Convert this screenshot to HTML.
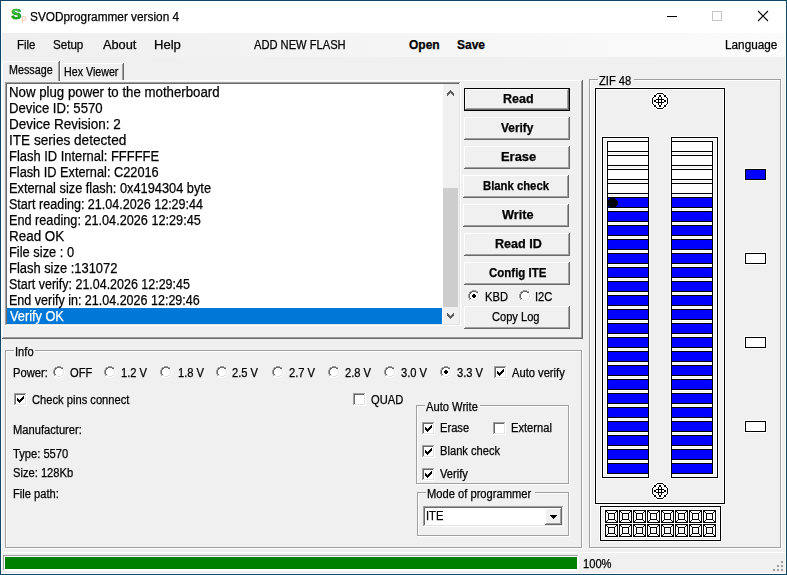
<!DOCTYPE html><html><head><meta charset="utf-8"><style>
html,body{margin:0;padding:0;width:787px;height:575px;overflow:hidden;background:#f0f0f0}
.t{position:absolute;white-space:pre;-webkit-text-stroke:0.25px currentColor}
</style></head><body>
<div style="position:absolute;left:0px;top:0px;width:787px;height:575px;background:#0f4866"></div>
<div style="position:absolute;left:1px;top:1px;width:785px;height:573px;background:#fff"></div>
<div style="position:absolute;left:2px;top:33px;width:783px;height:540px;background:#f0f0f0"></div>
<div style="position:absolute;left:2px;top:33px;width:783px;height:24px;background:linear-gradient(to right,#efefef,#fbfbfb)"></div>
<div class="t" style="left:11.3px;top:6.2px;font:bold 15px/15px 'Liberation Sans', sans-serif;color:#2fb52f;-webkit-text-stroke:0.7px #1a9c1a;background:linear-gradient(#7ee07e 0%,#3cc03c 45%,#0a960a 100%);-webkit-background-clip:text;-webkit-text-fill-color:transparent">S</div>
<div class="t" style="left:21.5px;top:14px;font:9px/9px 'Liberation Sans', sans-serif;color:#f9c49a;-webkit-text-stroke:0">p</div>
<div class="t" style="left:30.02px;top:11px;font:12px/12px 'Liberation Sans', sans-serif;color:#000;transform:scaleX(0.9847);transform-origin:0 0">SVODprogrammer version 4</div>
<div style="position:absolute;left:667px;top:16px;width:10px;height:1px;background:#000"></div>
<div style="position:absolute;left:712px;top:11px;width:10px;height:10px;border:1px solid #c6c6c6;box-sizing:border-box"></div>
<svg style="position:absolute;left:757px;top:10px" width="12" height="12" viewBox="0 0 12 12"><path d="M1 1 L11 11 M11 1 L1 11" stroke="#000" stroke-width="1.1"/></svg>
<div class="t" style="left:16.84px;top:39px;font:12px/12px 'Liberation Sans', sans-serif;color:#000;transform:scaleX(0.9556);transform-origin:0 0">File</div>
<div class="t" style="left:53.03px;top:39px;font:12px/12px 'Liberation Sans', sans-serif;color:#000;transform:scaleX(0.9667);transform-origin:0 0">Setup</div>
<div class="t" style="left:103.00px;top:39px;font:12px/12px 'Liberation Sans', sans-serif;color:#000;transform:scaleX(1.0645);transform-origin:0 0">About</div>
<div class="t" style="left:153.91px;top:39px;font:12px/12px 'Liberation Sans', sans-serif;color:#000;transform:scaleX(1.0870);transform-origin:0 0">Help</div>
<div class="t" style="left:254.00px;top:39px;font:12px/12px 'Liberation Sans', sans-serif;color:#000;transform:scaleX(0.9286);transform-origin:0 0">ADD NEW FLASH</div>
<div class="t" style="left:725.02px;top:39px;font:12px/12px 'Liberation Sans', sans-serif;color:#000;transform:scaleX(0.9808);transform-origin:0 0">Language</div>
<div class="t" style="left:409.00px;top:39px;font:bold 12px/12px 'Liberation Sans', sans-serif;color:#000;transform:scaleX(1.0000);transform-origin:0 0">Open</div>
<div class="t" style="left:457.00px;top:39px;font:bold 12px/12px 'Liberation Sans', sans-serif;color:#000;transform:scaleX(1.0000);transform-origin:0 0">Save</div>
<div style="position:absolute;left:2px;top:80px;width:581px;height:259px;background:#696969"></div>
<div style="position:absolute;left:2px;top:80px;width:580px;height:258px;background:#fff"></div>
<div style="position:absolute;left:3px;top:81px;width:579px;height:257px;background:#a0a0a0"></div>
<div style="position:absolute;left:3px;top:81px;width:578px;height:256px;background:#f0f0f0"></div>
<div style="position:absolute;left:60px;top:63px;width:64px;height:17px;background:#696969"></div>
<div style="position:absolute;left:60px;top:63px;width:63px;height:17px;background:#fff"></div>
<div style="position:absolute;left:61px;top:64px;width:62px;height:16px;background:#a0a0a0"></div>
<div style="position:absolute;left:61px;top:64px;width:61px;height:16px;background:#f0f0f0"></div>
<div class="t" style="left:63.51px;top:66px;font:12px/12px 'Liberation Sans', sans-serif;color:#000;transform:scaleX(0.8900);transform-origin:0 0">Hex Viewer</div>
<div style="position:absolute;left:2px;top:61px;width:58px;height:20px;background:#696969"></div>
<div style="position:absolute;left:2px;top:61px;width:57px;height:20px;background:#fff"></div>
<div style="position:absolute;left:3px;top:62px;width:56px;height:19px;background:#a0a0a0"></div>
<div style="position:absolute;left:3px;top:62px;width:55px;height:19px;background:#f0f0f0"></div>
<div class="t" style="left:8.60px;top:64px;font:12px/12px 'Liberation Sans', sans-serif;color:#000;transform:scaleX(0.8957);transform-origin:0 0">Message</div>
<div style="position:absolute;left:5px;top:82px;width:456px;height:244px;background:#fff"></div>
<div style="position:absolute;left:5px;top:82px;width:455px;height:243px;background:#a0a0a0"></div>
<div style="position:absolute;left:6px;top:83px;width:454px;height:242px;background:#e3e3e3"></div>
<div style="position:absolute;left:6px;top:83px;width:453px;height:241px;background:#696969"></div>
<div style="position:absolute;left:7px;top:84px;width:452px;height:240px;background:#fff"></div>
<div style="position:absolute;left:7px;top:308px;width:435px;height:16px;background:#0078d7"></div>
<div class="t" style="left:9.05px;top:85px;font:14px/14px 'Liberation Sans', sans-serif;color:#000;transform:scaleX(0.9462);transform-origin:0 0">Now plug power to the motherboard</div>
<div class="t" style="left:9.06px;top:101px;font:14px/14px 'Liberation Sans', sans-serif;color:#000;transform:scaleX(0.9398);transform-origin:0 0">Device ID: 5570</div>
<div class="t" style="left:9.04px;top:117px;font:14px/14px 'Liberation Sans', sans-serif;color:#000;transform:scaleX(0.9635);transform-origin:0 0">Device Revision: 2</div>
<div class="t" style="left:9.03px;top:133px;font:14px/14px 'Liberation Sans', sans-serif;color:#000;transform:scaleX(0.9723);transform-origin:0 0">ITE series detected</div>
<div class="t" style="left:9.08px;top:149px;font:14px/14px 'Liberation Sans', sans-serif;color:#000;transform:scaleX(0.9230);transform-origin:0 0">Flash ID Internal: FFFFFE</div>
<div class="t" style="left:9.09px;top:165px;font:14px/14px 'Liberation Sans', sans-serif;color:#000;transform:scaleX(0.9117);transform-origin:0 0">Flash ID External: C22016</div>
<div class="t" style="left:9.09px;top:181px;font:14px/14px 'Liberation Sans', sans-serif;color:#000;transform:scaleX(0.9141);transform-origin:0 0">External size flash: 0x4194304 byte</div>
<div class="t" style="left:9.10px;top:197px;font:14px/14px 'Liberation Sans', sans-serif;color:#000;transform:scaleX(0.8967);transform-origin:0 0">Start reading: 21.04.2026 12:29:44</div>
<div class="t" style="left:9.09px;top:213px;font:14px/14px 'Liberation Sans', sans-serif;color:#000;transform:scaleX(0.9057);transform-origin:0 0">End reading: 21.04.2026 12:29:45</div>
<div class="t" style="left:9.04px;top:229px;font:14px/14px 'Liberation Sans', sans-serif;color:#000;transform:scaleX(0.9589);transform-origin:0 0">Read OK</div>
<div class="t" style="left:9.08px;top:245px;font:14px/14px 'Liberation Sans', sans-serif;color:#000;transform:scaleX(0.9203);transform-origin:0 0">File size : 0</div>
<div class="t" style="left:9.08px;top:261px;font:14px/14px 'Liberation Sans', sans-serif;color:#000;transform:scaleX(0.9224);transform-origin:0 0">Flash size :131072</div>
<div class="t" style="left:9.11px;top:277px;font:14px/14px 'Liberation Sans', sans-serif;color:#000;transform:scaleX(0.8901);transform-origin:0 0">Start verify: 21.04.2026 12:29:45</div>
<div class="t" style="left:9.11px;top:293px;font:14px/14px 'Liberation Sans', sans-serif;color:#000;transform:scaleX(0.8943);transform-origin:0 0">End verify in: 21.04.2026 12:29:46</div>
<div class="t" style="left:10.00px;top:309px;font:14px/14px 'Liberation Sans', sans-serif;color:#fff;transform:scaleX(0.9102);transform-origin:0 0">Verify OK</div>
<div style="position:absolute;left:443px;top:84px;width:16px;height:240px;background:#f0f0f0"></div>
<div style="position:absolute;left:443px;top:188px;width:15px;height:119px;background:#cdcdcd"></div>
<svg style="position:absolute;left:447px;top:90px" width="7" height="6" shape-rendering="crispEdges"><rect x="3" y="0" width="1" height="1" fill="#606060"/><rect x="2" y="1" width="3" height="1" fill="#606060"/><rect x="1" y="2" width="5" height="1" fill="#606060"/><rect x="0" y="3" width="3" height="1" fill="#606060"/><rect x="4" y="3" width="3" height="1" fill="#606060"/><rect x="0" y="4" width="2" height="1" fill="#606060"/><rect x="5" y="4" width="2" height="1" fill="#606060"/><rect x="0" y="5" width="1" height="1" fill="#606060"/><rect x="6" y="5" width="1" height="1" fill="#606060"/></svg>
<svg style="position:absolute;left:447px;top:313px" width="7" height="6" shape-rendering="crispEdges"><rect x="0" y="0" width="1" height="1" fill="#606060"/><rect x="6" y="0" width="1" height="1" fill="#606060"/><rect x="0" y="1" width="2" height="1" fill="#606060"/><rect x="5" y="1" width="2" height="1" fill="#606060"/><rect x="0" y="2" width="3" height="1" fill="#606060"/><rect x="4" y="2" width="3" height="1" fill="#606060"/><rect x="1" y="3" width="5" height="1" fill="#606060"/><rect x="2" y="4" width="3" height="1" fill="#606060"/><rect x="3" y="5" width="1" height="1" fill="#606060"/></svg>
<div style="position:absolute;left:464px;top:88px;width:106px;height:23px;background:#000"></div>
<div style="position:absolute;left:465px;top:89px;width:104px;height:21px;background:#696969"></div>
<div style="position:absolute;left:465px;top:89px;width:103px;height:20px;background:#fff"></div>
<div style="position:absolute;left:466px;top:90px;width:102px;height:19px;background:#a0a0a0"></div>
<div style="position:absolute;left:466px;top:90px;width:101px;height:18px;background:#f0f0f0"></div>
<div class="t" style="left:502.66px;top:93px;font:bold 12px/12px 'Liberation Sans', sans-serif;color:#000;transform:scaleX(1.0429);transform-origin:0 0">Read</div>
<div style="position:absolute;left:464px;top:117px;width:106px;height:23px;background:#696969"></div>
<div style="position:absolute;left:464px;top:117px;width:105px;height:22px;background:#fff"></div>
<div style="position:absolute;left:465px;top:118px;width:104px;height:21px;background:#a0a0a0"></div>
<div style="position:absolute;left:465px;top:118px;width:103px;height:20px;background:#f0f0f0"></div>
<div class="t" style="left:500.90px;top:122px;font:bold 12px/12px 'Liberation Sans', sans-serif;color:#000;transform:scaleX(0.9909);transform-origin:0 0">Verify</div>
<div style="position:absolute;left:464px;top:146px;width:106px;height:23px;background:#696969"></div>
<div style="position:absolute;left:464px;top:146px;width:105px;height:22px;background:#fff"></div>
<div style="position:absolute;left:465px;top:147px;width:104px;height:21px;background:#a0a0a0"></div>
<div style="position:absolute;left:465px;top:147px;width:103px;height:20px;background:#f0f0f0"></div>
<div class="t" style="left:500.52px;top:151px;font:bold 12px/12px 'Liberation Sans', sans-serif;color:#000;transform:scaleX(1.0774);transform-origin:0 0">Erase</div>
<div style="position:absolute;left:463px;top:175px;width:106px;height:23px;background:#696969"></div>
<div style="position:absolute;left:463px;top:175px;width:105px;height:22px;background:#fff"></div>
<div style="position:absolute;left:464px;top:176px;width:104px;height:21px;background:#a0a0a0"></div>
<div style="position:absolute;left:464px;top:176px;width:103px;height:20px;background:#f0f0f0"></div>
<div class="t" style="left:482.56px;top:180px;font:bold 12px/12px 'Liberation Sans', sans-serif;color:#000;transform:scaleX(0.9420);transform-origin:0 0">Blank check</div>
<div style="position:absolute;left:463px;top:204px;width:106px;height:23px;background:#696969"></div>
<div style="position:absolute;left:463px;top:204px;width:105px;height:22px;background:#fff"></div>
<div style="position:absolute;left:464px;top:205px;width:104px;height:21px;background:#a0a0a0"></div>
<div style="position:absolute;left:464px;top:205px;width:103px;height:20px;background:#f0f0f0"></div>
<div class="t" style="left:502.20px;top:209px;font:bold 12px/12px 'Liberation Sans', sans-serif;color:#000;transform:scaleX(1.0586);transform-origin:0 0">Write</div>
<div style="position:absolute;left:464px;top:233px;width:106px;height:23px;background:#696969"></div>
<div style="position:absolute;left:464px;top:233px;width:105px;height:22px;background:#fff"></div>
<div style="position:absolute;left:465px;top:234px;width:104px;height:21px;background:#a0a0a0"></div>
<div style="position:absolute;left:465px;top:234px;width:103px;height:20px;background:#f0f0f0"></div>
<div class="t" style="left:494.55px;top:238px;font:bold 12px/12px 'Liberation Sans', sans-serif;color:#000;transform:scaleX(1.0488);transform-origin:0 0">Read ID</div>
<div style="position:absolute;left:464px;top:262px;width:106px;height:23px;background:#696969"></div>
<div style="position:absolute;left:464px;top:262px;width:105px;height:22px;background:#fff"></div>
<div style="position:absolute;left:465px;top:263px;width:104px;height:21px;background:#a0a0a0"></div>
<div style="position:absolute;left:465px;top:263px;width:103px;height:20px;background:#f0f0f0"></div>
<div class="t" style="left:489.40px;top:267px;font:bold 12px/12px 'Liberation Sans', sans-serif;color:#000;transform:scaleX(0.9567);transform-origin:0 0">Config ITE</div>
<svg style="position:absolute;left:468px;top:290px" width="12" height="12" shape-rendering="crispEdges"><rect x="4" y="0" width="4" height="1" fill="#a0a0a0"/><rect x="2" y="1" width="2" height="1" fill="#a0a0a0"/><rect x="4" y="1" width="4" height="1" fill="#696969"/><rect x="8" y="1" width="2" height="1" fill="#a0a0a0"/><rect x="1" y="2" width="1" height="1" fill="#a0a0a0"/><rect x="2" y="2" width="2" height="1" fill="#696969"/><rect x="4" y="2" width="4" height="1" fill="#fff"/><rect x="8" y="2" width="2" height="1" fill="#696969"/><rect x="10" y="2" width="1" height="1" fill="#fff"/><rect x="1" y="3" width="1" height="1" fill="#a0a0a0"/><rect x="2" y="3" width="1" height="1" fill="#696969"/><rect x="3" y="3" width="6" height="1" fill="#fff"/><rect x="9" y="3" width="1" height="1" fill="#e3e3e3"/><rect x="10" y="3" width="1" height="1" fill="#fff"/><rect x="0" y="4" width="1" height="1" fill="#a0a0a0"/><rect x="1" y="4" width="1" height="1" fill="#696969"/><rect x="2" y="4" width="3" height="1" fill="#fff"/><rect x="5" y="4" width="2" height="1" fill="#000"/><rect x="7" y="4" width="3" height="1" fill="#fff"/><rect x="10" y="4" width="1" height="1" fill="#e3e3e3"/><rect x="11" y="4" width="1" height="1" fill="#fff"/><rect x="0" y="5" width="1" height="1" fill="#a0a0a0"/><rect x="1" y="5" width="1" height="1" fill="#696969"/><rect x="2" y="5" width="2" height="1" fill="#fff"/><rect x="4" y="5" width="4" height="1" fill="#000"/><rect x="8" y="5" width="2" height="1" fill="#fff"/><rect x="10" y="5" width="1" height="1" fill="#e3e3e3"/><rect x="11" y="5" width="1" height="1" fill="#fff"/><rect x="0" y="6" width="1" height="1" fill="#a0a0a0"/><rect x="1" y="6" width="1" height="1" fill="#696969"/><rect x="2" y="6" width="2" height="1" fill="#fff"/><rect x="4" y="6" width="4" height="1" fill="#000"/><rect x="8" y="6" width="2" height="1" fill="#fff"/><rect x="10" y="6" width="1" height="1" fill="#e3e3e3"/><rect x="11" y="6" width="1" height="1" fill="#fff"/><rect x="0" y="7" width="1" height="1" fill="#a0a0a0"/><rect x="1" y="7" width="1" height="1" fill="#696969"/><rect x="2" y="7" width="3" height="1" fill="#fff"/><rect x="5" y="7" width="2" height="1" fill="#000"/><rect x="7" y="7" width="3" height="1" fill="#fff"/><rect x="10" y="7" width="1" height="1" fill="#e3e3e3"/><rect x="11" y="7" width="1" height="1" fill="#fff"/><rect x="1" y="8" width="1" height="1" fill="#a0a0a0"/><rect x="2" y="8" width="1" height="1" fill="#696969"/><rect x="3" y="8" width="6" height="1" fill="#fff"/><rect x="9" y="8" width="1" height="1" fill="#e3e3e3"/><rect x="10" y="8" width="1" height="1" fill="#fff"/><rect x="1" y="9" width="1" height="1" fill="#a0a0a0"/><rect x="2" y="9" width="2" height="1" fill="#e3e3e3"/><rect x="4" y="9" width="4" height="1" fill="#fff"/><rect x="8" y="9" width="2" height="1" fill="#e3e3e3"/><rect x="10" y="9" width="1" height="1" fill="#fff"/><rect x="2" y="10" width="2" height="1" fill="#fff"/><rect x="4" y="10" width="4" height="1" fill="#e3e3e3"/><rect x="8" y="10" width="2" height="1" fill="#fff"/><rect x="4" y="11" width="4" height="1" fill="#fff"/></svg>
<div class="t" style="left:484.5px;top:291px;font:12px/12px 'Liberation Sans', sans-serif;color:#000;transform:scaleX(0.93);transform-origin:0 0">KBD</div>
<svg style="position:absolute;left:519px;top:290px" width="12" height="12" shape-rendering="crispEdges"><rect x="4" y="0" width="4" height="1" fill="#a0a0a0"/><rect x="2" y="1" width="2" height="1" fill="#a0a0a0"/><rect x="4" y="1" width="4" height="1" fill="#696969"/><rect x="8" y="1" width="2" height="1" fill="#a0a0a0"/><rect x="1" y="2" width="1" height="1" fill="#a0a0a0"/><rect x="2" y="2" width="2" height="1" fill="#696969"/><rect x="4" y="2" width="4" height="1" fill="#fff"/><rect x="8" y="2" width="2" height="1" fill="#696969"/><rect x="10" y="2" width="1" height="1" fill="#fff"/><rect x="1" y="3" width="1" height="1" fill="#a0a0a0"/><rect x="2" y="3" width="1" height="1" fill="#696969"/><rect x="3" y="3" width="6" height="1" fill="#fff"/><rect x="9" y="3" width="1" height="1" fill="#e3e3e3"/><rect x="10" y="3" width="1" height="1" fill="#fff"/><rect x="0" y="4" width="1" height="1" fill="#a0a0a0"/><rect x="1" y="4" width="1" height="1" fill="#696969"/><rect x="2" y="4" width="8" height="1" fill="#fff"/><rect x="10" y="4" width="1" height="1" fill="#e3e3e3"/><rect x="11" y="4" width="1" height="1" fill="#fff"/><rect x="0" y="5" width="1" height="1" fill="#a0a0a0"/><rect x="1" y="5" width="1" height="1" fill="#696969"/><rect x="2" y="5" width="8" height="1" fill="#fff"/><rect x="10" y="5" width="1" height="1" fill="#e3e3e3"/><rect x="11" y="5" width="1" height="1" fill="#fff"/><rect x="0" y="6" width="1" height="1" fill="#a0a0a0"/><rect x="1" y="6" width="1" height="1" fill="#696969"/><rect x="2" y="6" width="8" height="1" fill="#fff"/><rect x="10" y="6" width="1" height="1" fill="#e3e3e3"/><rect x="11" y="6" width="1" height="1" fill="#fff"/><rect x="0" y="7" width="1" height="1" fill="#a0a0a0"/><rect x="1" y="7" width="1" height="1" fill="#696969"/><rect x="2" y="7" width="8" height="1" fill="#fff"/><rect x="10" y="7" width="1" height="1" fill="#e3e3e3"/><rect x="11" y="7" width="1" height="1" fill="#fff"/><rect x="1" y="8" width="1" height="1" fill="#a0a0a0"/><rect x="2" y="8" width="1" height="1" fill="#696969"/><rect x="3" y="8" width="6" height="1" fill="#fff"/><rect x="9" y="8" width="1" height="1" fill="#e3e3e3"/><rect x="10" y="8" width="1" height="1" fill="#fff"/><rect x="1" y="9" width="1" height="1" fill="#a0a0a0"/><rect x="2" y="9" width="2" height="1" fill="#e3e3e3"/><rect x="4" y="9" width="4" height="1" fill="#fff"/><rect x="8" y="9" width="2" height="1" fill="#e3e3e3"/><rect x="10" y="9" width="1" height="1" fill="#fff"/><rect x="2" y="10" width="2" height="1" fill="#fff"/><rect x="4" y="10" width="4" height="1" fill="#e3e3e3"/><rect x="8" y="10" width="2" height="1" fill="#fff"/><rect x="4" y="11" width="4" height="1" fill="#fff"/></svg>
<div class="t" style="left:535px;top:291px;font:12px/12px 'Liberation Sans', sans-serif;color:#000;transform:scaleX(0.93);transform-origin:0 0">I2C</div>
<div style="position:absolute;left:464px;top:306px;width:106px;height:23px;background:#696969"></div>
<div style="position:absolute;left:464px;top:306px;width:105px;height:22px;background:#fff"></div>
<div style="position:absolute;left:465px;top:307px;width:104px;height:21px;background:#a0a0a0"></div>
<div style="position:absolute;left:465px;top:307px;width:103px;height:20px;background:#f0f0f0"></div>
<div class="t" style="left:492.38px;top:311px;font:12px/12px 'Liberation Sans', sans-serif;color:#000;transform:scaleX(0.9240);transform-origin:0 0">Copy Log</div>
<div style="position:absolute;left:5px;top:350px;width:577px;height:198px;border:1px solid #a0a0a0;box-sizing:border-box"></div>
<div style="position:absolute;left:6px;top:351px;width:575px;height:1px;background:#fff"></div>
<div style="position:absolute;left:6px;top:351px;width:1px;height:196px;background:#fff"></div>
<div style="position:absolute;left:5px;top:548px;width:578px;height:1px;background:#fff"></div>
<div style="position:absolute;left:582px;top:350px;width:1px;height:199px;background:#fff"></div>
<div style="position:absolute;left:14px;top:349px;width:21px;height:3px;background:#f0f0f0"></div>
<div class="t" style="left:15px;top:346px;font:12px/12px 'Liberation Sans', sans-serif;color:#000;transform:scaleX(0.93);transform-origin:0 0">Info</div>
<div class="t" style="left:13px;top:367px;font:12px/12px 'Liberation Sans', sans-serif;color:#000;transform:scaleX(0.93);transform-origin:0 0">Power:</div>
<svg style="position:absolute;left:53px;top:366px" width="12" height="12" shape-rendering="crispEdges"><rect x="4" y="0" width="4" height="1" fill="#a0a0a0"/><rect x="2" y="1" width="2" height="1" fill="#a0a0a0"/><rect x="4" y="1" width="4" height="1" fill="#696969"/><rect x="8" y="1" width="2" height="1" fill="#a0a0a0"/><rect x="1" y="2" width="1" height="1" fill="#a0a0a0"/><rect x="2" y="2" width="2" height="1" fill="#696969"/><rect x="4" y="2" width="4" height="1" fill="#fff"/><rect x="8" y="2" width="2" height="1" fill="#696969"/><rect x="10" y="2" width="1" height="1" fill="#fff"/><rect x="1" y="3" width="1" height="1" fill="#a0a0a0"/><rect x="2" y="3" width="1" height="1" fill="#696969"/><rect x="3" y="3" width="6" height="1" fill="#fff"/><rect x="9" y="3" width="1" height="1" fill="#e3e3e3"/><rect x="10" y="3" width="1" height="1" fill="#fff"/><rect x="0" y="4" width="1" height="1" fill="#a0a0a0"/><rect x="1" y="4" width="1" height="1" fill="#696969"/><rect x="2" y="4" width="8" height="1" fill="#fff"/><rect x="10" y="4" width="1" height="1" fill="#e3e3e3"/><rect x="11" y="4" width="1" height="1" fill="#fff"/><rect x="0" y="5" width="1" height="1" fill="#a0a0a0"/><rect x="1" y="5" width="1" height="1" fill="#696969"/><rect x="2" y="5" width="8" height="1" fill="#fff"/><rect x="10" y="5" width="1" height="1" fill="#e3e3e3"/><rect x="11" y="5" width="1" height="1" fill="#fff"/><rect x="0" y="6" width="1" height="1" fill="#a0a0a0"/><rect x="1" y="6" width="1" height="1" fill="#696969"/><rect x="2" y="6" width="8" height="1" fill="#fff"/><rect x="10" y="6" width="1" height="1" fill="#e3e3e3"/><rect x="11" y="6" width="1" height="1" fill="#fff"/><rect x="0" y="7" width="1" height="1" fill="#a0a0a0"/><rect x="1" y="7" width="1" height="1" fill="#696969"/><rect x="2" y="7" width="8" height="1" fill="#fff"/><rect x="10" y="7" width="1" height="1" fill="#e3e3e3"/><rect x="11" y="7" width="1" height="1" fill="#fff"/><rect x="1" y="8" width="1" height="1" fill="#a0a0a0"/><rect x="2" y="8" width="1" height="1" fill="#696969"/><rect x="3" y="8" width="6" height="1" fill="#fff"/><rect x="9" y="8" width="1" height="1" fill="#e3e3e3"/><rect x="10" y="8" width="1" height="1" fill="#fff"/><rect x="1" y="9" width="1" height="1" fill="#a0a0a0"/><rect x="2" y="9" width="2" height="1" fill="#e3e3e3"/><rect x="4" y="9" width="4" height="1" fill="#fff"/><rect x="8" y="9" width="2" height="1" fill="#e3e3e3"/><rect x="10" y="9" width="1" height="1" fill="#fff"/><rect x="2" y="10" width="2" height="1" fill="#fff"/><rect x="4" y="10" width="4" height="1" fill="#e3e3e3"/><rect x="8" y="10" width="2" height="1" fill="#fff"/><rect x="4" y="11" width="4" height="1" fill="#fff"/></svg>
<div class="t" style="left:70px;top:367px;font:12px/12px 'Liberation Sans', sans-serif;color:#000;transform:scaleX(0.93);transform-origin:0 0">OFF</div>
<svg style="position:absolute;left:104px;top:366px" width="12" height="12" shape-rendering="crispEdges"><rect x="4" y="0" width="4" height="1" fill="#a0a0a0"/><rect x="2" y="1" width="2" height="1" fill="#a0a0a0"/><rect x="4" y="1" width="4" height="1" fill="#696969"/><rect x="8" y="1" width="2" height="1" fill="#a0a0a0"/><rect x="1" y="2" width="1" height="1" fill="#a0a0a0"/><rect x="2" y="2" width="2" height="1" fill="#696969"/><rect x="4" y="2" width="4" height="1" fill="#fff"/><rect x="8" y="2" width="2" height="1" fill="#696969"/><rect x="10" y="2" width="1" height="1" fill="#fff"/><rect x="1" y="3" width="1" height="1" fill="#a0a0a0"/><rect x="2" y="3" width="1" height="1" fill="#696969"/><rect x="3" y="3" width="6" height="1" fill="#fff"/><rect x="9" y="3" width="1" height="1" fill="#e3e3e3"/><rect x="10" y="3" width="1" height="1" fill="#fff"/><rect x="0" y="4" width="1" height="1" fill="#a0a0a0"/><rect x="1" y="4" width="1" height="1" fill="#696969"/><rect x="2" y="4" width="8" height="1" fill="#fff"/><rect x="10" y="4" width="1" height="1" fill="#e3e3e3"/><rect x="11" y="4" width="1" height="1" fill="#fff"/><rect x="0" y="5" width="1" height="1" fill="#a0a0a0"/><rect x="1" y="5" width="1" height="1" fill="#696969"/><rect x="2" y="5" width="8" height="1" fill="#fff"/><rect x="10" y="5" width="1" height="1" fill="#e3e3e3"/><rect x="11" y="5" width="1" height="1" fill="#fff"/><rect x="0" y="6" width="1" height="1" fill="#a0a0a0"/><rect x="1" y="6" width="1" height="1" fill="#696969"/><rect x="2" y="6" width="8" height="1" fill="#fff"/><rect x="10" y="6" width="1" height="1" fill="#e3e3e3"/><rect x="11" y="6" width="1" height="1" fill="#fff"/><rect x="0" y="7" width="1" height="1" fill="#a0a0a0"/><rect x="1" y="7" width="1" height="1" fill="#696969"/><rect x="2" y="7" width="8" height="1" fill="#fff"/><rect x="10" y="7" width="1" height="1" fill="#e3e3e3"/><rect x="11" y="7" width="1" height="1" fill="#fff"/><rect x="1" y="8" width="1" height="1" fill="#a0a0a0"/><rect x="2" y="8" width="1" height="1" fill="#696969"/><rect x="3" y="8" width="6" height="1" fill="#fff"/><rect x="9" y="8" width="1" height="1" fill="#e3e3e3"/><rect x="10" y="8" width="1" height="1" fill="#fff"/><rect x="1" y="9" width="1" height="1" fill="#a0a0a0"/><rect x="2" y="9" width="2" height="1" fill="#e3e3e3"/><rect x="4" y="9" width="4" height="1" fill="#fff"/><rect x="8" y="9" width="2" height="1" fill="#e3e3e3"/><rect x="10" y="9" width="1" height="1" fill="#fff"/><rect x="2" y="10" width="2" height="1" fill="#fff"/><rect x="4" y="10" width="4" height="1" fill="#e3e3e3"/><rect x="8" y="10" width="2" height="1" fill="#fff"/><rect x="4" y="11" width="4" height="1" fill="#fff"/></svg>
<div class="t" style="left:121px;top:367px;font:12px/12px 'Liberation Sans', sans-serif;color:#000;transform:scaleX(0.93);transform-origin:0 0">1.2 V</div>
<svg style="position:absolute;left:160px;top:366px" width="12" height="12" shape-rendering="crispEdges"><rect x="4" y="0" width="4" height="1" fill="#a0a0a0"/><rect x="2" y="1" width="2" height="1" fill="#a0a0a0"/><rect x="4" y="1" width="4" height="1" fill="#696969"/><rect x="8" y="1" width="2" height="1" fill="#a0a0a0"/><rect x="1" y="2" width="1" height="1" fill="#a0a0a0"/><rect x="2" y="2" width="2" height="1" fill="#696969"/><rect x="4" y="2" width="4" height="1" fill="#fff"/><rect x="8" y="2" width="2" height="1" fill="#696969"/><rect x="10" y="2" width="1" height="1" fill="#fff"/><rect x="1" y="3" width="1" height="1" fill="#a0a0a0"/><rect x="2" y="3" width="1" height="1" fill="#696969"/><rect x="3" y="3" width="6" height="1" fill="#fff"/><rect x="9" y="3" width="1" height="1" fill="#e3e3e3"/><rect x="10" y="3" width="1" height="1" fill="#fff"/><rect x="0" y="4" width="1" height="1" fill="#a0a0a0"/><rect x="1" y="4" width="1" height="1" fill="#696969"/><rect x="2" y="4" width="8" height="1" fill="#fff"/><rect x="10" y="4" width="1" height="1" fill="#e3e3e3"/><rect x="11" y="4" width="1" height="1" fill="#fff"/><rect x="0" y="5" width="1" height="1" fill="#a0a0a0"/><rect x="1" y="5" width="1" height="1" fill="#696969"/><rect x="2" y="5" width="8" height="1" fill="#fff"/><rect x="10" y="5" width="1" height="1" fill="#e3e3e3"/><rect x="11" y="5" width="1" height="1" fill="#fff"/><rect x="0" y="6" width="1" height="1" fill="#a0a0a0"/><rect x="1" y="6" width="1" height="1" fill="#696969"/><rect x="2" y="6" width="8" height="1" fill="#fff"/><rect x="10" y="6" width="1" height="1" fill="#e3e3e3"/><rect x="11" y="6" width="1" height="1" fill="#fff"/><rect x="0" y="7" width="1" height="1" fill="#a0a0a0"/><rect x="1" y="7" width="1" height="1" fill="#696969"/><rect x="2" y="7" width="8" height="1" fill="#fff"/><rect x="10" y="7" width="1" height="1" fill="#e3e3e3"/><rect x="11" y="7" width="1" height="1" fill="#fff"/><rect x="1" y="8" width="1" height="1" fill="#a0a0a0"/><rect x="2" y="8" width="1" height="1" fill="#696969"/><rect x="3" y="8" width="6" height="1" fill="#fff"/><rect x="9" y="8" width="1" height="1" fill="#e3e3e3"/><rect x="10" y="8" width="1" height="1" fill="#fff"/><rect x="1" y="9" width="1" height="1" fill="#a0a0a0"/><rect x="2" y="9" width="2" height="1" fill="#e3e3e3"/><rect x="4" y="9" width="4" height="1" fill="#fff"/><rect x="8" y="9" width="2" height="1" fill="#e3e3e3"/><rect x="10" y="9" width="1" height="1" fill="#fff"/><rect x="2" y="10" width="2" height="1" fill="#fff"/><rect x="4" y="10" width="4" height="1" fill="#e3e3e3"/><rect x="8" y="10" width="2" height="1" fill="#fff"/><rect x="4" y="11" width="4" height="1" fill="#fff"/></svg>
<div class="t" style="left:178px;top:367px;font:12px/12px 'Liberation Sans', sans-serif;color:#000;transform:scaleX(0.93);transform-origin:0 0">1.8 V</div>
<svg style="position:absolute;left:216px;top:366px" width="12" height="12" shape-rendering="crispEdges"><rect x="4" y="0" width="4" height="1" fill="#a0a0a0"/><rect x="2" y="1" width="2" height="1" fill="#a0a0a0"/><rect x="4" y="1" width="4" height="1" fill="#696969"/><rect x="8" y="1" width="2" height="1" fill="#a0a0a0"/><rect x="1" y="2" width="1" height="1" fill="#a0a0a0"/><rect x="2" y="2" width="2" height="1" fill="#696969"/><rect x="4" y="2" width="4" height="1" fill="#fff"/><rect x="8" y="2" width="2" height="1" fill="#696969"/><rect x="10" y="2" width="1" height="1" fill="#fff"/><rect x="1" y="3" width="1" height="1" fill="#a0a0a0"/><rect x="2" y="3" width="1" height="1" fill="#696969"/><rect x="3" y="3" width="6" height="1" fill="#fff"/><rect x="9" y="3" width="1" height="1" fill="#e3e3e3"/><rect x="10" y="3" width="1" height="1" fill="#fff"/><rect x="0" y="4" width="1" height="1" fill="#a0a0a0"/><rect x="1" y="4" width="1" height="1" fill="#696969"/><rect x="2" y="4" width="8" height="1" fill="#fff"/><rect x="10" y="4" width="1" height="1" fill="#e3e3e3"/><rect x="11" y="4" width="1" height="1" fill="#fff"/><rect x="0" y="5" width="1" height="1" fill="#a0a0a0"/><rect x="1" y="5" width="1" height="1" fill="#696969"/><rect x="2" y="5" width="8" height="1" fill="#fff"/><rect x="10" y="5" width="1" height="1" fill="#e3e3e3"/><rect x="11" y="5" width="1" height="1" fill="#fff"/><rect x="0" y="6" width="1" height="1" fill="#a0a0a0"/><rect x="1" y="6" width="1" height="1" fill="#696969"/><rect x="2" y="6" width="8" height="1" fill="#fff"/><rect x="10" y="6" width="1" height="1" fill="#e3e3e3"/><rect x="11" y="6" width="1" height="1" fill="#fff"/><rect x="0" y="7" width="1" height="1" fill="#a0a0a0"/><rect x="1" y="7" width="1" height="1" fill="#696969"/><rect x="2" y="7" width="8" height="1" fill="#fff"/><rect x="10" y="7" width="1" height="1" fill="#e3e3e3"/><rect x="11" y="7" width="1" height="1" fill="#fff"/><rect x="1" y="8" width="1" height="1" fill="#a0a0a0"/><rect x="2" y="8" width="1" height="1" fill="#696969"/><rect x="3" y="8" width="6" height="1" fill="#fff"/><rect x="9" y="8" width="1" height="1" fill="#e3e3e3"/><rect x="10" y="8" width="1" height="1" fill="#fff"/><rect x="1" y="9" width="1" height="1" fill="#a0a0a0"/><rect x="2" y="9" width="2" height="1" fill="#e3e3e3"/><rect x="4" y="9" width="4" height="1" fill="#fff"/><rect x="8" y="9" width="2" height="1" fill="#e3e3e3"/><rect x="10" y="9" width="1" height="1" fill="#fff"/><rect x="2" y="10" width="2" height="1" fill="#fff"/><rect x="4" y="10" width="4" height="1" fill="#e3e3e3"/><rect x="8" y="10" width="2" height="1" fill="#fff"/><rect x="4" y="11" width="4" height="1" fill="#fff"/></svg>
<div class="t" style="left:232px;top:367px;font:12px/12px 'Liberation Sans', sans-serif;color:#000;transform:scaleX(0.93);transform-origin:0 0">2.5 V</div>
<svg style="position:absolute;left:272px;top:366px" width="12" height="12" shape-rendering="crispEdges"><rect x="4" y="0" width="4" height="1" fill="#a0a0a0"/><rect x="2" y="1" width="2" height="1" fill="#a0a0a0"/><rect x="4" y="1" width="4" height="1" fill="#696969"/><rect x="8" y="1" width="2" height="1" fill="#a0a0a0"/><rect x="1" y="2" width="1" height="1" fill="#a0a0a0"/><rect x="2" y="2" width="2" height="1" fill="#696969"/><rect x="4" y="2" width="4" height="1" fill="#fff"/><rect x="8" y="2" width="2" height="1" fill="#696969"/><rect x="10" y="2" width="1" height="1" fill="#fff"/><rect x="1" y="3" width="1" height="1" fill="#a0a0a0"/><rect x="2" y="3" width="1" height="1" fill="#696969"/><rect x="3" y="3" width="6" height="1" fill="#fff"/><rect x="9" y="3" width="1" height="1" fill="#e3e3e3"/><rect x="10" y="3" width="1" height="1" fill="#fff"/><rect x="0" y="4" width="1" height="1" fill="#a0a0a0"/><rect x="1" y="4" width="1" height="1" fill="#696969"/><rect x="2" y="4" width="8" height="1" fill="#fff"/><rect x="10" y="4" width="1" height="1" fill="#e3e3e3"/><rect x="11" y="4" width="1" height="1" fill="#fff"/><rect x="0" y="5" width="1" height="1" fill="#a0a0a0"/><rect x="1" y="5" width="1" height="1" fill="#696969"/><rect x="2" y="5" width="8" height="1" fill="#fff"/><rect x="10" y="5" width="1" height="1" fill="#e3e3e3"/><rect x="11" y="5" width="1" height="1" fill="#fff"/><rect x="0" y="6" width="1" height="1" fill="#a0a0a0"/><rect x="1" y="6" width="1" height="1" fill="#696969"/><rect x="2" y="6" width="8" height="1" fill="#fff"/><rect x="10" y="6" width="1" height="1" fill="#e3e3e3"/><rect x="11" y="6" width="1" height="1" fill="#fff"/><rect x="0" y="7" width="1" height="1" fill="#a0a0a0"/><rect x="1" y="7" width="1" height="1" fill="#696969"/><rect x="2" y="7" width="8" height="1" fill="#fff"/><rect x="10" y="7" width="1" height="1" fill="#e3e3e3"/><rect x="11" y="7" width="1" height="1" fill="#fff"/><rect x="1" y="8" width="1" height="1" fill="#a0a0a0"/><rect x="2" y="8" width="1" height="1" fill="#696969"/><rect x="3" y="8" width="6" height="1" fill="#fff"/><rect x="9" y="8" width="1" height="1" fill="#e3e3e3"/><rect x="10" y="8" width="1" height="1" fill="#fff"/><rect x="1" y="9" width="1" height="1" fill="#a0a0a0"/><rect x="2" y="9" width="2" height="1" fill="#e3e3e3"/><rect x="4" y="9" width="4" height="1" fill="#fff"/><rect x="8" y="9" width="2" height="1" fill="#e3e3e3"/><rect x="10" y="9" width="1" height="1" fill="#fff"/><rect x="2" y="10" width="2" height="1" fill="#fff"/><rect x="4" y="10" width="4" height="1" fill="#e3e3e3"/><rect x="8" y="10" width="2" height="1" fill="#fff"/><rect x="4" y="11" width="4" height="1" fill="#fff"/></svg>
<div class="t" style="left:289px;top:367px;font:12px/12px 'Liberation Sans', sans-serif;color:#000;transform:scaleX(0.93);transform-origin:0 0">2.7 V</div>
<svg style="position:absolute;left:328px;top:366px" width="12" height="12" shape-rendering="crispEdges"><rect x="4" y="0" width="4" height="1" fill="#a0a0a0"/><rect x="2" y="1" width="2" height="1" fill="#a0a0a0"/><rect x="4" y="1" width="4" height="1" fill="#696969"/><rect x="8" y="1" width="2" height="1" fill="#a0a0a0"/><rect x="1" y="2" width="1" height="1" fill="#a0a0a0"/><rect x="2" y="2" width="2" height="1" fill="#696969"/><rect x="4" y="2" width="4" height="1" fill="#fff"/><rect x="8" y="2" width="2" height="1" fill="#696969"/><rect x="10" y="2" width="1" height="1" fill="#fff"/><rect x="1" y="3" width="1" height="1" fill="#a0a0a0"/><rect x="2" y="3" width="1" height="1" fill="#696969"/><rect x="3" y="3" width="6" height="1" fill="#fff"/><rect x="9" y="3" width="1" height="1" fill="#e3e3e3"/><rect x="10" y="3" width="1" height="1" fill="#fff"/><rect x="0" y="4" width="1" height="1" fill="#a0a0a0"/><rect x="1" y="4" width="1" height="1" fill="#696969"/><rect x="2" y="4" width="8" height="1" fill="#fff"/><rect x="10" y="4" width="1" height="1" fill="#e3e3e3"/><rect x="11" y="4" width="1" height="1" fill="#fff"/><rect x="0" y="5" width="1" height="1" fill="#a0a0a0"/><rect x="1" y="5" width="1" height="1" fill="#696969"/><rect x="2" y="5" width="8" height="1" fill="#fff"/><rect x="10" y="5" width="1" height="1" fill="#e3e3e3"/><rect x="11" y="5" width="1" height="1" fill="#fff"/><rect x="0" y="6" width="1" height="1" fill="#a0a0a0"/><rect x="1" y="6" width="1" height="1" fill="#696969"/><rect x="2" y="6" width="8" height="1" fill="#fff"/><rect x="10" y="6" width="1" height="1" fill="#e3e3e3"/><rect x="11" y="6" width="1" height="1" fill="#fff"/><rect x="0" y="7" width="1" height="1" fill="#a0a0a0"/><rect x="1" y="7" width="1" height="1" fill="#696969"/><rect x="2" y="7" width="8" height="1" fill="#fff"/><rect x="10" y="7" width="1" height="1" fill="#e3e3e3"/><rect x="11" y="7" width="1" height="1" fill="#fff"/><rect x="1" y="8" width="1" height="1" fill="#a0a0a0"/><rect x="2" y="8" width="1" height="1" fill="#696969"/><rect x="3" y="8" width="6" height="1" fill="#fff"/><rect x="9" y="8" width="1" height="1" fill="#e3e3e3"/><rect x="10" y="8" width="1" height="1" fill="#fff"/><rect x="1" y="9" width="1" height="1" fill="#a0a0a0"/><rect x="2" y="9" width="2" height="1" fill="#e3e3e3"/><rect x="4" y="9" width="4" height="1" fill="#fff"/><rect x="8" y="9" width="2" height="1" fill="#e3e3e3"/><rect x="10" y="9" width="1" height="1" fill="#fff"/><rect x="2" y="10" width="2" height="1" fill="#fff"/><rect x="4" y="10" width="4" height="1" fill="#e3e3e3"/><rect x="8" y="10" width="2" height="1" fill="#fff"/><rect x="4" y="11" width="4" height="1" fill="#fff"/></svg>
<div class="t" style="left:345px;top:367px;font:12px/12px 'Liberation Sans', sans-serif;color:#000;transform:scaleX(0.93);transform-origin:0 0">2.8 V</div>
<svg style="position:absolute;left:384px;top:366px" width="12" height="12" shape-rendering="crispEdges"><rect x="4" y="0" width="4" height="1" fill="#a0a0a0"/><rect x="2" y="1" width="2" height="1" fill="#a0a0a0"/><rect x="4" y="1" width="4" height="1" fill="#696969"/><rect x="8" y="1" width="2" height="1" fill="#a0a0a0"/><rect x="1" y="2" width="1" height="1" fill="#a0a0a0"/><rect x="2" y="2" width="2" height="1" fill="#696969"/><rect x="4" y="2" width="4" height="1" fill="#fff"/><rect x="8" y="2" width="2" height="1" fill="#696969"/><rect x="10" y="2" width="1" height="1" fill="#fff"/><rect x="1" y="3" width="1" height="1" fill="#a0a0a0"/><rect x="2" y="3" width="1" height="1" fill="#696969"/><rect x="3" y="3" width="6" height="1" fill="#fff"/><rect x="9" y="3" width="1" height="1" fill="#e3e3e3"/><rect x="10" y="3" width="1" height="1" fill="#fff"/><rect x="0" y="4" width="1" height="1" fill="#a0a0a0"/><rect x="1" y="4" width="1" height="1" fill="#696969"/><rect x="2" y="4" width="8" height="1" fill="#fff"/><rect x="10" y="4" width="1" height="1" fill="#e3e3e3"/><rect x="11" y="4" width="1" height="1" fill="#fff"/><rect x="0" y="5" width="1" height="1" fill="#a0a0a0"/><rect x="1" y="5" width="1" height="1" fill="#696969"/><rect x="2" y="5" width="8" height="1" fill="#fff"/><rect x="10" y="5" width="1" height="1" fill="#e3e3e3"/><rect x="11" y="5" width="1" height="1" fill="#fff"/><rect x="0" y="6" width="1" height="1" fill="#a0a0a0"/><rect x="1" y="6" width="1" height="1" fill="#696969"/><rect x="2" y="6" width="8" height="1" fill="#fff"/><rect x="10" y="6" width="1" height="1" fill="#e3e3e3"/><rect x="11" y="6" width="1" height="1" fill="#fff"/><rect x="0" y="7" width="1" height="1" fill="#a0a0a0"/><rect x="1" y="7" width="1" height="1" fill="#696969"/><rect x="2" y="7" width="8" height="1" fill="#fff"/><rect x="10" y="7" width="1" height="1" fill="#e3e3e3"/><rect x="11" y="7" width="1" height="1" fill="#fff"/><rect x="1" y="8" width="1" height="1" fill="#a0a0a0"/><rect x="2" y="8" width="1" height="1" fill="#696969"/><rect x="3" y="8" width="6" height="1" fill="#fff"/><rect x="9" y="8" width="1" height="1" fill="#e3e3e3"/><rect x="10" y="8" width="1" height="1" fill="#fff"/><rect x="1" y="9" width="1" height="1" fill="#a0a0a0"/><rect x="2" y="9" width="2" height="1" fill="#e3e3e3"/><rect x="4" y="9" width="4" height="1" fill="#fff"/><rect x="8" y="9" width="2" height="1" fill="#e3e3e3"/><rect x="10" y="9" width="1" height="1" fill="#fff"/><rect x="2" y="10" width="2" height="1" fill="#fff"/><rect x="4" y="10" width="4" height="1" fill="#e3e3e3"/><rect x="8" y="10" width="2" height="1" fill="#fff"/><rect x="4" y="11" width="4" height="1" fill="#fff"/></svg>
<div class="t" style="left:401px;top:367px;font:12px/12px 'Liberation Sans', sans-serif;color:#000;transform:scaleX(0.93);transform-origin:0 0">3.0 V</div>
<svg style="position:absolute;left:440px;top:366px" width="12" height="12" shape-rendering="crispEdges"><rect x="4" y="0" width="4" height="1" fill="#a0a0a0"/><rect x="2" y="1" width="2" height="1" fill="#a0a0a0"/><rect x="4" y="1" width="4" height="1" fill="#696969"/><rect x="8" y="1" width="2" height="1" fill="#a0a0a0"/><rect x="1" y="2" width="1" height="1" fill="#a0a0a0"/><rect x="2" y="2" width="2" height="1" fill="#696969"/><rect x="4" y="2" width="4" height="1" fill="#fff"/><rect x="8" y="2" width="2" height="1" fill="#696969"/><rect x="10" y="2" width="1" height="1" fill="#fff"/><rect x="1" y="3" width="1" height="1" fill="#a0a0a0"/><rect x="2" y="3" width="1" height="1" fill="#696969"/><rect x="3" y="3" width="6" height="1" fill="#fff"/><rect x="9" y="3" width="1" height="1" fill="#e3e3e3"/><rect x="10" y="3" width="1" height="1" fill="#fff"/><rect x="0" y="4" width="1" height="1" fill="#a0a0a0"/><rect x="1" y="4" width="1" height="1" fill="#696969"/><rect x="2" y="4" width="3" height="1" fill="#fff"/><rect x="5" y="4" width="2" height="1" fill="#000"/><rect x="7" y="4" width="3" height="1" fill="#fff"/><rect x="10" y="4" width="1" height="1" fill="#e3e3e3"/><rect x="11" y="4" width="1" height="1" fill="#fff"/><rect x="0" y="5" width="1" height="1" fill="#a0a0a0"/><rect x="1" y="5" width="1" height="1" fill="#696969"/><rect x="2" y="5" width="2" height="1" fill="#fff"/><rect x="4" y="5" width="4" height="1" fill="#000"/><rect x="8" y="5" width="2" height="1" fill="#fff"/><rect x="10" y="5" width="1" height="1" fill="#e3e3e3"/><rect x="11" y="5" width="1" height="1" fill="#fff"/><rect x="0" y="6" width="1" height="1" fill="#a0a0a0"/><rect x="1" y="6" width="1" height="1" fill="#696969"/><rect x="2" y="6" width="2" height="1" fill="#fff"/><rect x="4" y="6" width="4" height="1" fill="#000"/><rect x="8" y="6" width="2" height="1" fill="#fff"/><rect x="10" y="6" width="1" height="1" fill="#e3e3e3"/><rect x="11" y="6" width="1" height="1" fill="#fff"/><rect x="0" y="7" width="1" height="1" fill="#a0a0a0"/><rect x="1" y="7" width="1" height="1" fill="#696969"/><rect x="2" y="7" width="3" height="1" fill="#fff"/><rect x="5" y="7" width="2" height="1" fill="#000"/><rect x="7" y="7" width="3" height="1" fill="#fff"/><rect x="10" y="7" width="1" height="1" fill="#e3e3e3"/><rect x="11" y="7" width="1" height="1" fill="#fff"/><rect x="1" y="8" width="1" height="1" fill="#a0a0a0"/><rect x="2" y="8" width="1" height="1" fill="#696969"/><rect x="3" y="8" width="6" height="1" fill="#fff"/><rect x="9" y="8" width="1" height="1" fill="#e3e3e3"/><rect x="10" y="8" width="1" height="1" fill="#fff"/><rect x="1" y="9" width="1" height="1" fill="#a0a0a0"/><rect x="2" y="9" width="2" height="1" fill="#e3e3e3"/><rect x="4" y="9" width="4" height="1" fill="#fff"/><rect x="8" y="9" width="2" height="1" fill="#e3e3e3"/><rect x="10" y="9" width="1" height="1" fill="#fff"/><rect x="2" y="10" width="2" height="1" fill="#fff"/><rect x="4" y="10" width="4" height="1" fill="#e3e3e3"/><rect x="8" y="10" width="2" height="1" fill="#fff"/><rect x="4" y="11" width="4" height="1" fill="#fff"/></svg>
<div class="t" style="left:457px;top:367px;font:12px/12px 'Liberation Sans', sans-serif;color:#000;transform:scaleX(0.93);transform-origin:0 0">3.3 V</div>
<div style="position:absolute;left:494px;top:366px;width:13px;height:13px;background:#fff"></div>
<div style="position:absolute;left:494px;top:366px;width:12px;height:12px;background:#a0a0a0"></div>
<div style="position:absolute;left:495px;top:367px;width:11px;height:11px;background:#e3e3e3"></div>
<div style="position:absolute;left:495px;top:367px;width:10px;height:10px;background:#696969"></div>
<div style="position:absolute;left:496px;top:368px;width:9px;height:9px;background:#fff"></div>
<svg style="position:absolute;left:496px;top:368px" width="9" height="9" shape-rendering="crispEdges"><rect x="7" y="1" width="1" height="1" fill="#000"/><rect x="6" y="2" width="2" height="1" fill="#000"/><rect x="1" y="3" width="1" height="1" fill="#000"/><rect x="5" y="3" width="3" height="1" fill="#000"/><rect x="1" y="4" width="2" height="1" fill="#000"/><rect x="4" y="4" width="3" height="1" fill="#000"/><rect x="1" y="5" width="5" height="1" fill="#000"/><rect x="2" y="6" width="3" height="1" fill="#000"/><rect x="3" y="7" width="1" height="1" fill="#000"/></svg>
<div class="t" style="left:512px;top:367px;font:12px/12px 'Liberation Sans', sans-serif;color:#000;transform:scaleX(0.93);transform-origin:0 0">Auto verify</div>
<div style="position:absolute;left:14px;top:393px;width:13px;height:13px;background:#fff"></div>
<div style="position:absolute;left:14px;top:393px;width:12px;height:12px;background:#a0a0a0"></div>
<div style="position:absolute;left:15px;top:394px;width:11px;height:11px;background:#e3e3e3"></div>
<div style="position:absolute;left:15px;top:394px;width:10px;height:10px;background:#696969"></div>
<div style="position:absolute;left:16px;top:395px;width:9px;height:9px;background:#fff"></div>
<svg style="position:absolute;left:16px;top:395px" width="9" height="9" shape-rendering="crispEdges"><rect x="7" y="1" width="1" height="1" fill="#000"/><rect x="6" y="2" width="2" height="1" fill="#000"/><rect x="1" y="3" width="1" height="1" fill="#000"/><rect x="5" y="3" width="3" height="1" fill="#000"/><rect x="1" y="4" width="2" height="1" fill="#000"/><rect x="4" y="4" width="3" height="1" fill="#000"/><rect x="1" y="5" width="5" height="1" fill="#000"/><rect x="2" y="6" width="3" height="1" fill="#000"/><rect x="3" y="7" width="1" height="1" fill="#000"/></svg>
<div class="t" style="left:32px;top:394px;font:12px/12px 'Liberation Sans', sans-serif;color:#000;transform:scaleX(0.93);transform-origin:0 0">Check pins connect</div>
<div style="position:absolute;left:353px;top:393px;width:13px;height:13px;background:#fff"></div>
<div style="position:absolute;left:353px;top:393px;width:12px;height:12px;background:#a0a0a0"></div>
<div style="position:absolute;left:354px;top:394px;width:11px;height:11px;background:#e3e3e3"></div>
<div style="position:absolute;left:354px;top:394px;width:10px;height:10px;background:#696969"></div>
<div style="position:absolute;left:355px;top:395px;width:9px;height:9px;background:#fff"></div>
<div class="t" style="left:371px;top:394px;font:12px/12px 'Liberation Sans', sans-serif;color:#000;transform:scaleX(0.93);transform-origin:0 0">QUAD</div>
<div class="t" style="left:13px;top:424px;font:12px/12px 'Liberation Sans', sans-serif;color:#000;transform:scaleX(0.93);transform-origin:0 0">Manufacturer:</div>
<div class="t" style="left:13px;top:448px;font:12px/12px 'Liberation Sans', sans-serif;color:#000;transform:scaleX(0.93);transform-origin:0 0">Type: 5570</div>
<div class="t" style="left:13px;top:467px;font:12px/12px 'Liberation Sans', sans-serif;color:#000;transform:scaleX(0.93);transform-origin:0 0">Size: 128Kb</div>
<div class="t" style="left:13px;top:488px;font:12px/12px 'Liberation Sans', sans-serif;color:#000;transform:scaleX(0.93);transform-origin:0 0">File path:</div>
<div style="position:absolute;left:416px;top:405px;width:153px;height:79px;border:1px solid #a0a0a0;box-sizing:border-box"></div>
<div style="position:absolute;left:417px;top:406px;width:151px;height:1px;background:#fff"></div>
<div style="position:absolute;left:417px;top:406px;width:1px;height:77px;background:#fff"></div>
<div style="position:absolute;left:416px;top:484px;width:154px;height:1px;background:#fff"></div>
<div style="position:absolute;left:569px;top:405px;width:1px;height:80px;background:#fff"></div>
<div style="position:absolute;left:425px;top:404px;width:55px;height:3px;background:#f0f0f0"></div>
<div class="t" style="left:426px;top:401px;font:12px/12px 'Liberation Sans', sans-serif;color:#000;transform:scaleX(0.93);transform-origin:0 0">Auto Write</div>
<div style="position:absolute;left:422px;top:422px;width:13px;height:13px;background:#fff"></div>
<div style="position:absolute;left:422px;top:422px;width:12px;height:12px;background:#a0a0a0"></div>
<div style="position:absolute;left:423px;top:423px;width:11px;height:11px;background:#e3e3e3"></div>
<div style="position:absolute;left:423px;top:423px;width:10px;height:10px;background:#696969"></div>
<div style="position:absolute;left:424px;top:424px;width:9px;height:9px;background:#fff"></div>
<svg style="position:absolute;left:424px;top:424px" width="9" height="9" shape-rendering="crispEdges"><rect x="7" y="1" width="1" height="1" fill="#000"/><rect x="6" y="2" width="2" height="1" fill="#000"/><rect x="1" y="3" width="1" height="1" fill="#000"/><rect x="5" y="3" width="3" height="1" fill="#000"/><rect x="1" y="4" width="2" height="1" fill="#000"/><rect x="4" y="4" width="3" height="1" fill="#000"/><rect x="1" y="5" width="5" height="1" fill="#000"/><rect x="2" y="6" width="3" height="1" fill="#000"/><rect x="3" y="7" width="1" height="1" fill="#000"/></svg>
<div class="t" style="left:440px;top:422px;font:12px/12px 'Liberation Sans', sans-serif;color:#000;transform:scaleX(0.93);transform-origin:0 0">Erase</div>
<div style="position:absolute;left:493px;top:422px;width:13px;height:13px;background:#fff"></div>
<div style="position:absolute;left:493px;top:422px;width:12px;height:12px;background:#a0a0a0"></div>
<div style="position:absolute;left:494px;top:423px;width:11px;height:11px;background:#e3e3e3"></div>
<div style="position:absolute;left:494px;top:423px;width:10px;height:10px;background:#696969"></div>
<div style="position:absolute;left:495px;top:424px;width:9px;height:9px;background:#fff"></div>
<div class="t" style="left:511px;top:422px;font:12px/12px 'Liberation Sans', sans-serif;color:#000;transform:scaleX(0.93);transform-origin:0 0">External</div>
<div style="position:absolute;left:422px;top:445px;width:13px;height:13px;background:#fff"></div>
<div style="position:absolute;left:422px;top:445px;width:12px;height:12px;background:#a0a0a0"></div>
<div style="position:absolute;left:423px;top:446px;width:11px;height:11px;background:#e3e3e3"></div>
<div style="position:absolute;left:423px;top:446px;width:10px;height:10px;background:#696969"></div>
<div style="position:absolute;left:424px;top:447px;width:9px;height:9px;background:#fff"></div>
<svg style="position:absolute;left:424px;top:447px" width="9" height="9" shape-rendering="crispEdges"><rect x="7" y="1" width="1" height="1" fill="#000"/><rect x="6" y="2" width="2" height="1" fill="#000"/><rect x="1" y="3" width="1" height="1" fill="#000"/><rect x="5" y="3" width="3" height="1" fill="#000"/><rect x="1" y="4" width="2" height="1" fill="#000"/><rect x="4" y="4" width="3" height="1" fill="#000"/><rect x="1" y="5" width="5" height="1" fill="#000"/><rect x="2" y="6" width="3" height="1" fill="#000"/><rect x="3" y="7" width="1" height="1" fill="#000"/></svg>
<div class="t" style="left:440px;top:445px;font:12px/12px 'Liberation Sans', sans-serif;color:#000;transform:scaleX(0.93);transform-origin:0 0">Blank check</div>
<div style="position:absolute;left:422px;top:468px;width:13px;height:13px;background:#fff"></div>
<div style="position:absolute;left:422px;top:468px;width:12px;height:12px;background:#a0a0a0"></div>
<div style="position:absolute;left:423px;top:469px;width:11px;height:11px;background:#e3e3e3"></div>
<div style="position:absolute;left:423px;top:469px;width:10px;height:10px;background:#696969"></div>
<div style="position:absolute;left:424px;top:470px;width:9px;height:9px;background:#fff"></div>
<svg style="position:absolute;left:424px;top:470px" width="9" height="9" shape-rendering="crispEdges"><rect x="7" y="1" width="1" height="1" fill="#000"/><rect x="6" y="2" width="2" height="1" fill="#000"/><rect x="1" y="3" width="1" height="1" fill="#000"/><rect x="5" y="3" width="3" height="1" fill="#000"/><rect x="1" y="4" width="2" height="1" fill="#000"/><rect x="4" y="4" width="3" height="1" fill="#000"/><rect x="1" y="5" width="5" height="1" fill="#000"/><rect x="2" y="6" width="3" height="1" fill="#000"/><rect x="3" y="7" width="1" height="1" fill="#000"/></svg>
<div class="t" style="left:440px;top:468px;font:12px/12px 'Liberation Sans', sans-serif;color:#000;transform:scaleX(0.93);transform-origin:0 0">Verify</div>
<div style="position:absolute;left:417px;top:492px;width:152px;height:44px;border:1px solid #a0a0a0;box-sizing:border-box"></div>
<div style="position:absolute;left:418px;top:493px;width:150px;height:1px;background:#fff"></div>
<div style="position:absolute;left:418px;top:493px;width:1px;height:42px;background:#fff"></div>
<div style="position:absolute;left:417px;top:536px;width:153px;height:1px;background:#fff"></div>
<div style="position:absolute;left:569px;top:492px;width:1px;height:45px;background:#fff"></div>
<div style="position:absolute;left:426px;top:491px;width:109px;height:3px;background:#f0f0f0"></div>
<div class="t" style="left:427px;top:488px;font:12px/12px 'Liberation Sans', sans-serif;color:#000;transform:scaleX(0.93);transform-origin:0 0">Mode of programmer</div>
<div style="position:absolute;left:423px;top:506px;width:141px;height:21px;background:#fff"></div>
<div style="position:absolute;left:423px;top:506px;width:140px;height:20px;background:#a0a0a0"></div>
<div style="position:absolute;left:424px;top:507px;width:139px;height:19px;background:#e3e3e3"></div>
<div style="position:absolute;left:424px;top:507px;width:138px;height:18px;background:#696969"></div>
<div style="position:absolute;left:425px;top:508px;width:137px;height:17px;background:#fff"></div>
<div class="t" style="left:426px;top:510px;font:12px/12px 'Liberation Sans', sans-serif;color:#000;transform:scaleX(0.93);transform-origin:0 0">ITE</div>
<div style="position:absolute;left:545px;top:508px;width:17px;height:17px;background:#696969"></div>
<div style="position:absolute;left:545px;top:508px;width:16px;height:16px;background:#fff"></div>
<div style="position:absolute;left:546px;top:509px;width:15px;height:15px;background:#a0a0a0"></div>
<div style="position:absolute;left:546px;top:509px;width:14px;height:14px;background:#f0f0f0"></div>
<svg style="position:absolute;left:550px;top:515px" width="7" height="4" shape-rendering="crispEdges"><rect x="0" y="0" width="7" height="1" fill="#000"/><rect x="1" y="1" width="5" height="1" fill="#000"/><rect x="2" y="2" width="3" height="1" fill="#000"/><rect x="3" y="3" width="1" height="1" fill="#000"/></svg>
<div style="position:absolute;left:589px;top:79px;width:192px;height:469px;border:1px solid #a0a0a0;box-sizing:border-box"></div>
<div style="position:absolute;left:590px;top:80px;width:190px;height:1px;background:#fff"></div>
<div style="position:absolute;left:590px;top:80px;width:1px;height:467px;background:#fff"></div>
<div style="position:absolute;left:589px;top:548px;width:193px;height:1px;background:#fff"></div>
<div style="position:absolute;left:781px;top:79px;width:1px;height:470px;background:#fff"></div>
<div style="position:absolute;left:598px;top:78px;width:36px;height:3px;background:#f0f0f0"></div>
<div class="t" style="left:599px;top:75px;font:12px/12px 'Liberation Sans', sans-serif;color:#000;transform:scaleX(0.93);transform-origin:0 0">ZIF 48</div>
<div style="position:absolute;left:595px;top:88px;width:130px;height:416px;border:1px solid #000;box-sizing:border-box;box-shadow:0 0 0 1px #fff, inset 0 0 0 1px #fff;"></div>
<svg style="position:absolute;left:651px;top:92px" width="18" height="18" shape-rendering="crispEdges"><rect x="5" y="0" width="8" height="1" fill="#fff"/><rect x="4" y="1" width="2" height="1" fill="#fff"/><rect x="12" y="1" width="2" height="1" fill="#fff"/><rect x="2" y="2" width="3" height="1" fill="#fff"/><rect x="13" y="2" width="3" height="1" fill="#fff"/><rect x="2" y="3" width="1" height="1" fill="#fff"/><rect x="15" y="3" width="1" height="1" fill="#fff"/><rect x="1" y="4" width="2" height="1" fill="#fff"/><rect x="15" y="4" width="2" height="1" fill="#fff"/><rect x="1" y="5" width="1" height="1" fill="#fff"/><rect x="16" y="5" width="1" height="1" fill="#fff"/><rect x="0" y="6" width="2" height="1" fill="#fff"/><rect x="16" y="6" width="2" height="1" fill="#fff"/><rect x="0" y="7" width="1" height="1" fill="#fff"/><rect x="17" y="7" width="1" height="1" fill="#fff"/><rect x="0" y="8" width="1" height="1" fill="#fff"/><rect x="17" y="8" width="1" height="1" fill="#fff"/><rect x="0" y="9" width="1" height="1" fill="#fff"/><rect x="17" y="9" width="1" height="1" fill="#fff"/><rect x="0" y="10" width="1" height="1" fill="#fff"/><rect x="17" y="10" width="1" height="1" fill="#fff"/><rect x="0" y="11" width="2" height="1" fill="#fff"/><rect x="16" y="11" width="2" height="1" fill="#fff"/><rect x="1" y="12" width="1" height="1" fill="#fff"/><rect x="16" y="12" width="1" height="1" fill="#fff"/><rect x="1" y="13" width="2" height="1" fill="#fff"/><rect x="15" y="13" width="2" height="1" fill="#fff"/><rect x="2" y="14" width="1" height="1" fill="#fff"/><rect x="15" y="14" width="1" height="1" fill="#fff"/><rect x="2" y="15" width="3" height="1" fill="#fff"/><rect x="13" y="15" width="3" height="1" fill="#fff"/><rect x="4" y="16" width="2" height="1" fill="#fff"/><rect x="12" y="16" width="2" height="1" fill="#fff"/><rect x="5" y="17" width="8" height="1" fill="#fff"/></svg>
<svg style="position:absolute;left:651px;top:92px" width="18" height="18" shape-rendering="crispEdges"><rect x="6" y="1" width="6" height="1" fill="#000"/><rect x="5" y="2" width="1" height="1" fill="#000"/><rect x="6" y="2" width="6" height="1" fill="#fff"/><rect x="12" y="2" width="1" height="1" fill="#000"/><rect x="3" y="3" width="2" height="1" fill="#000"/><rect x="5" y="3" width="3" height="1" fill="#fff"/><rect x="8" y="3" width="2" height="1" fill="#000"/><rect x="10" y="3" width="3" height="1" fill="#fff"/><rect x="13" y="3" width="2" height="1" fill="#000"/><rect x="3" y="4" width="2" height="1" fill="#000"/><rect x="5" y="4" width="3" height="1" fill="#fff"/><rect x="8" y="4" width="2" height="1" fill="#000"/><rect x="10" y="4" width="3" height="1" fill="#fff"/><rect x="13" y="4" width="2" height="1" fill="#000"/><rect x="2" y="5" width="1" height="1" fill="#000"/><rect x="3" y="5" width="4" height="1" fill="#fff"/><rect x="7" y="5" width="1" height="1" fill="#000"/><rect x="8" y="5" width="2" height="1" fill="#fff"/><rect x="10" y="5" width="1" height="1" fill="#000"/><rect x="11" y="5" width="4" height="1" fill="#fff"/><rect x="15" y="5" width="1" height="1" fill="#000"/><rect x="1" y="6" width="1" height="1" fill="#000"/><rect x="2" y="6" width="5" height="1" fill="#fff"/><rect x="7" y="6" width="1" height="1" fill="#000"/><rect x="8" y="6" width="2" height="1" fill="#fff"/><rect x="10" y="6" width="1" height="1" fill="#000"/><rect x="11" y="6" width="5" height="1" fill="#fff"/><rect x="16" y="6" width="1" height="1" fill="#000"/><rect x="1" y="7" width="1" height="1" fill="#000"/><rect x="2" y="7" width="3" height="1" fill="#fff"/><rect x="5" y="7" width="8" height="1" fill="#000"/><rect x="13" y="7" width="3" height="1" fill="#fff"/><rect x="16" y="7" width="1" height="1" fill="#000"/><rect x="1" y="8" width="1" height="1" fill="#000"/><rect x="2" y="8" width="1" height="1" fill="#fff"/><rect x="3" y="8" width="2" height="1" fill="#000"/><rect x="5" y="8" width="2" height="1" fill="#fff"/><rect x="7" y="8" width="1" height="1" fill="#000"/><rect x="8" y="8" width="2" height="1" fill="#fff"/><rect x="10" y="8" width="1" height="1" fill="#000"/><rect x="11" y="8" width="2" height="1" fill="#fff"/><rect x="13" y="8" width="2" height="1" fill="#000"/><rect x="15" y="8" width="1" height="1" fill="#fff"/><rect x="16" y="8" width="1" height="1" fill="#000"/><rect x="1" y="9" width="1" height="1" fill="#000"/><rect x="2" y="9" width="1" height="1" fill="#fff"/><rect x="3" y="9" width="2" height="1" fill="#000"/><rect x="5" y="9" width="2" height="1" fill="#fff"/><rect x="7" y="9" width="1" height="1" fill="#000"/><rect x="8" y="9" width="2" height="1" fill="#fff"/><rect x="10" y="9" width="1" height="1" fill="#000"/><rect x="11" y="9" width="2" height="1" fill="#fff"/><rect x="13" y="9" width="2" height="1" fill="#000"/><rect x="15" y="9" width="1" height="1" fill="#fff"/><rect x="16" y="9" width="1" height="1" fill="#000"/><rect x="1" y="10" width="1" height="1" fill="#000"/><rect x="2" y="10" width="3" height="1" fill="#fff"/><rect x="5" y="10" width="8" height="1" fill="#000"/><rect x="13" y="10" width="3" height="1" fill="#fff"/><rect x="16" y="10" width="1" height="1" fill="#000"/><rect x="1" y="11" width="1" height="1" fill="#000"/><rect x="2" y="11" width="5" height="1" fill="#fff"/><rect x="7" y="11" width="1" height="1" fill="#000"/><rect x="8" y="11" width="2" height="1" fill="#fff"/><rect x="10" y="11" width="1" height="1" fill="#000"/><rect x="11" y="11" width="5" height="1" fill="#fff"/><rect x="16" y="11" width="1" height="1" fill="#000"/><rect x="2" y="12" width="1" height="1" fill="#000"/><rect x="3" y="12" width="4" height="1" fill="#fff"/><rect x="7" y="12" width="1" height="1" fill="#000"/><rect x="8" y="12" width="2" height="1" fill="#fff"/><rect x="10" y="12" width="1" height="1" fill="#000"/><rect x="11" y="12" width="4" height="1" fill="#fff"/><rect x="15" y="12" width="1" height="1" fill="#000"/><rect x="3" y="13" width="2" height="1" fill="#000"/><rect x="5" y="13" width="3" height="1" fill="#fff"/><rect x="8" y="13" width="2" height="1" fill="#000"/><rect x="10" y="13" width="3" height="1" fill="#fff"/><rect x="13" y="13" width="2" height="1" fill="#000"/><rect x="3" y="14" width="2" height="1" fill="#000"/><rect x="5" y="14" width="3" height="1" fill="#fff"/><rect x="8" y="14" width="2" height="1" fill="#000"/><rect x="10" y="14" width="3" height="1" fill="#fff"/><rect x="13" y="14" width="2" height="1" fill="#000"/><rect x="5" y="15" width="1" height="1" fill="#000"/><rect x="6" y="15" width="6" height="1" fill="#fff"/><rect x="12" y="15" width="1" height="1" fill="#000"/><rect x="6" y="16" width="6" height="1" fill="#000"/></svg>
<svg style="position:absolute;left:651px;top:482px" width="18" height="18" shape-rendering="crispEdges"><rect x="5" y="0" width="8" height="1" fill="#fff"/><rect x="4" y="1" width="2" height="1" fill="#fff"/><rect x="12" y="1" width="2" height="1" fill="#fff"/><rect x="2" y="2" width="3" height="1" fill="#fff"/><rect x="13" y="2" width="3" height="1" fill="#fff"/><rect x="2" y="3" width="1" height="1" fill="#fff"/><rect x="15" y="3" width="1" height="1" fill="#fff"/><rect x="1" y="4" width="2" height="1" fill="#fff"/><rect x="15" y="4" width="2" height="1" fill="#fff"/><rect x="1" y="5" width="1" height="1" fill="#fff"/><rect x="16" y="5" width="1" height="1" fill="#fff"/><rect x="0" y="6" width="2" height="1" fill="#fff"/><rect x="16" y="6" width="2" height="1" fill="#fff"/><rect x="0" y="7" width="1" height="1" fill="#fff"/><rect x="17" y="7" width="1" height="1" fill="#fff"/><rect x="0" y="8" width="1" height="1" fill="#fff"/><rect x="17" y="8" width="1" height="1" fill="#fff"/><rect x="0" y="9" width="1" height="1" fill="#fff"/><rect x="17" y="9" width="1" height="1" fill="#fff"/><rect x="0" y="10" width="1" height="1" fill="#fff"/><rect x="17" y="10" width="1" height="1" fill="#fff"/><rect x="0" y="11" width="2" height="1" fill="#fff"/><rect x="16" y="11" width="2" height="1" fill="#fff"/><rect x="1" y="12" width="1" height="1" fill="#fff"/><rect x="16" y="12" width="1" height="1" fill="#fff"/><rect x="1" y="13" width="2" height="1" fill="#fff"/><rect x="15" y="13" width="2" height="1" fill="#fff"/><rect x="2" y="14" width="1" height="1" fill="#fff"/><rect x="15" y="14" width="1" height="1" fill="#fff"/><rect x="2" y="15" width="3" height="1" fill="#fff"/><rect x="13" y="15" width="3" height="1" fill="#fff"/><rect x="4" y="16" width="2" height="1" fill="#fff"/><rect x="12" y="16" width="2" height="1" fill="#fff"/><rect x="5" y="17" width="8" height="1" fill="#fff"/></svg>
<svg style="position:absolute;left:651px;top:482px" width="18" height="18" shape-rendering="crispEdges"><rect x="6" y="1" width="6" height="1" fill="#000"/><rect x="5" y="2" width="1" height="1" fill="#000"/><rect x="6" y="2" width="6" height="1" fill="#fff"/><rect x="12" y="2" width="1" height="1" fill="#000"/><rect x="3" y="3" width="2" height="1" fill="#000"/><rect x="5" y="3" width="3" height="1" fill="#fff"/><rect x="8" y="3" width="2" height="1" fill="#000"/><rect x="10" y="3" width="3" height="1" fill="#fff"/><rect x="13" y="3" width="2" height="1" fill="#000"/><rect x="3" y="4" width="2" height="1" fill="#000"/><rect x="5" y="4" width="3" height="1" fill="#fff"/><rect x="8" y="4" width="2" height="1" fill="#000"/><rect x="10" y="4" width="3" height="1" fill="#fff"/><rect x="13" y="4" width="2" height="1" fill="#000"/><rect x="2" y="5" width="1" height="1" fill="#000"/><rect x="3" y="5" width="4" height="1" fill="#fff"/><rect x="7" y="5" width="1" height="1" fill="#000"/><rect x="8" y="5" width="2" height="1" fill="#fff"/><rect x="10" y="5" width="1" height="1" fill="#000"/><rect x="11" y="5" width="4" height="1" fill="#fff"/><rect x="15" y="5" width="1" height="1" fill="#000"/><rect x="1" y="6" width="1" height="1" fill="#000"/><rect x="2" y="6" width="5" height="1" fill="#fff"/><rect x="7" y="6" width="1" height="1" fill="#000"/><rect x="8" y="6" width="2" height="1" fill="#fff"/><rect x="10" y="6" width="1" height="1" fill="#000"/><rect x="11" y="6" width="5" height="1" fill="#fff"/><rect x="16" y="6" width="1" height="1" fill="#000"/><rect x="1" y="7" width="1" height="1" fill="#000"/><rect x="2" y="7" width="3" height="1" fill="#fff"/><rect x="5" y="7" width="8" height="1" fill="#000"/><rect x="13" y="7" width="3" height="1" fill="#fff"/><rect x="16" y="7" width="1" height="1" fill="#000"/><rect x="1" y="8" width="1" height="1" fill="#000"/><rect x="2" y="8" width="1" height="1" fill="#fff"/><rect x="3" y="8" width="2" height="1" fill="#000"/><rect x="5" y="8" width="2" height="1" fill="#fff"/><rect x="7" y="8" width="1" height="1" fill="#000"/><rect x="8" y="8" width="2" height="1" fill="#fff"/><rect x="10" y="8" width="1" height="1" fill="#000"/><rect x="11" y="8" width="2" height="1" fill="#fff"/><rect x="13" y="8" width="2" height="1" fill="#000"/><rect x="15" y="8" width="1" height="1" fill="#fff"/><rect x="16" y="8" width="1" height="1" fill="#000"/><rect x="1" y="9" width="1" height="1" fill="#000"/><rect x="2" y="9" width="1" height="1" fill="#fff"/><rect x="3" y="9" width="2" height="1" fill="#000"/><rect x="5" y="9" width="2" height="1" fill="#fff"/><rect x="7" y="9" width="1" height="1" fill="#000"/><rect x="8" y="9" width="2" height="1" fill="#fff"/><rect x="10" y="9" width="1" height="1" fill="#000"/><rect x="11" y="9" width="2" height="1" fill="#fff"/><rect x="13" y="9" width="2" height="1" fill="#000"/><rect x="15" y="9" width="1" height="1" fill="#fff"/><rect x="16" y="9" width="1" height="1" fill="#000"/><rect x="1" y="10" width="1" height="1" fill="#000"/><rect x="2" y="10" width="3" height="1" fill="#fff"/><rect x="5" y="10" width="8" height="1" fill="#000"/><rect x="13" y="10" width="3" height="1" fill="#fff"/><rect x="16" y="10" width="1" height="1" fill="#000"/><rect x="1" y="11" width="1" height="1" fill="#000"/><rect x="2" y="11" width="5" height="1" fill="#fff"/><rect x="7" y="11" width="1" height="1" fill="#000"/><rect x="8" y="11" width="2" height="1" fill="#fff"/><rect x="10" y="11" width="1" height="1" fill="#000"/><rect x="11" y="11" width="5" height="1" fill="#fff"/><rect x="16" y="11" width="1" height="1" fill="#000"/><rect x="2" y="12" width="1" height="1" fill="#000"/><rect x="3" y="12" width="4" height="1" fill="#fff"/><rect x="7" y="12" width="1" height="1" fill="#000"/><rect x="8" y="12" width="2" height="1" fill="#fff"/><rect x="10" y="12" width="1" height="1" fill="#000"/><rect x="11" y="12" width="4" height="1" fill="#fff"/><rect x="15" y="12" width="1" height="1" fill="#000"/><rect x="3" y="13" width="2" height="1" fill="#000"/><rect x="5" y="13" width="3" height="1" fill="#fff"/><rect x="8" y="13" width="2" height="1" fill="#000"/><rect x="10" y="13" width="3" height="1" fill="#fff"/><rect x="13" y="13" width="2" height="1" fill="#000"/><rect x="3" y="14" width="2" height="1" fill="#000"/><rect x="5" y="14" width="3" height="1" fill="#fff"/><rect x="8" y="14" width="2" height="1" fill="#000"/><rect x="10" y="14" width="3" height="1" fill="#fff"/><rect x="13" y="14" width="2" height="1" fill="#000"/><rect x="5" y="15" width="1" height="1" fill="#000"/><rect x="6" y="15" width="6" height="1" fill="#fff"/><rect x="12" y="15" width="1" height="1" fill="#000"/><rect x="6" y="16" width="6" height="1" fill="#000"/></svg>
<div style="position:absolute;left:602px;top:137px;width:47px;height:341px;border:1px solid #000;box-sizing:border-box;box-shadow:0 0 0 1px #fff, inset 0 0 0 1px #fff;"></div>
<div style="position:absolute;left:607px;top:141px;width:42px;height:333px;background:#fff;border:1px solid #000;box-sizing:border-box;box-shadow:0 0 0 1px #fff"></div>
<div style="position:absolute;left:608px;top:142px;width:40px;height:9px;background:#fff"></div>
<div style="position:absolute;left:607px;top:151px;width:42px;height:1px;background:#000"></div>
<div style="position:absolute;left:609px;top:153px;width:38px;height:1px;background:#f0f0f0"></div>
<div style="position:absolute;left:607px;top:155px;width:42px;height:1px;background:#000"></div>
<div style="position:absolute;left:608px;top:156px;width:40px;height:9px;background:#fff"></div>
<div style="position:absolute;left:607px;top:165px;width:42px;height:1px;background:#000"></div>
<div style="position:absolute;left:609px;top:167px;width:38px;height:1px;background:#f0f0f0"></div>
<div style="position:absolute;left:607px;top:169px;width:42px;height:1px;background:#000"></div>
<div style="position:absolute;left:608px;top:170px;width:40px;height:9px;background:#fff"></div>
<div style="position:absolute;left:607px;top:179px;width:42px;height:1px;background:#000"></div>
<div style="position:absolute;left:609px;top:181px;width:38px;height:1px;background:#f0f0f0"></div>
<div style="position:absolute;left:607px;top:183px;width:42px;height:1px;background:#000"></div>
<div style="position:absolute;left:608px;top:184px;width:40px;height:9px;background:#fff"></div>
<div style="position:absolute;left:607px;top:193px;width:42px;height:1px;background:#000"></div>
<div style="position:absolute;left:609px;top:195px;width:38px;height:1px;background:#f0f0f0"></div>
<div style="position:absolute;left:607px;top:197px;width:42px;height:1px;background:#000"></div>
<div style="position:absolute;left:608px;top:198px;width:40px;height:9px;background:#0000ff"></div>
<div style="position:absolute;left:607px;top:207px;width:42px;height:1px;background:#000"></div>
<div style="position:absolute;left:609px;top:209px;width:38px;height:1px;background:#f0f0f0"></div>
<div style="position:absolute;left:607px;top:211px;width:42px;height:1px;background:#000"></div>
<div style="position:absolute;left:608px;top:212px;width:40px;height:9px;background:#0000ff"></div>
<div style="position:absolute;left:607px;top:221px;width:42px;height:1px;background:#000"></div>
<div style="position:absolute;left:609px;top:223px;width:38px;height:1px;background:#f0f0f0"></div>
<div style="position:absolute;left:607px;top:225px;width:42px;height:1px;background:#000"></div>
<div style="position:absolute;left:608px;top:226px;width:40px;height:9px;background:#0000ff"></div>
<div style="position:absolute;left:607px;top:235px;width:42px;height:1px;background:#000"></div>
<div style="position:absolute;left:609px;top:237px;width:38px;height:1px;background:#f0f0f0"></div>
<div style="position:absolute;left:607px;top:239px;width:42px;height:1px;background:#000"></div>
<div style="position:absolute;left:608px;top:240px;width:40px;height:9px;background:#0000ff"></div>
<div style="position:absolute;left:607px;top:249px;width:42px;height:1px;background:#000"></div>
<div style="position:absolute;left:609px;top:251px;width:38px;height:1px;background:#f0f0f0"></div>
<div style="position:absolute;left:607px;top:253px;width:42px;height:1px;background:#000"></div>
<div style="position:absolute;left:608px;top:254px;width:40px;height:9px;background:#0000ff"></div>
<div style="position:absolute;left:607px;top:263px;width:42px;height:1px;background:#000"></div>
<div style="position:absolute;left:609px;top:265px;width:38px;height:1px;background:#f0f0f0"></div>
<div style="position:absolute;left:607px;top:267px;width:42px;height:1px;background:#000"></div>
<div style="position:absolute;left:608px;top:268px;width:40px;height:9px;background:#0000ff"></div>
<div style="position:absolute;left:607px;top:277px;width:42px;height:1px;background:#000"></div>
<div style="position:absolute;left:609px;top:279px;width:38px;height:1px;background:#f0f0f0"></div>
<div style="position:absolute;left:607px;top:281px;width:42px;height:1px;background:#000"></div>
<div style="position:absolute;left:608px;top:282px;width:40px;height:9px;background:#0000ff"></div>
<div style="position:absolute;left:607px;top:291px;width:42px;height:1px;background:#000"></div>
<div style="position:absolute;left:609px;top:293px;width:38px;height:1px;background:#f0f0f0"></div>
<div style="position:absolute;left:607px;top:295px;width:42px;height:1px;background:#000"></div>
<div style="position:absolute;left:608px;top:296px;width:40px;height:9px;background:#0000ff"></div>
<div style="position:absolute;left:607px;top:305px;width:42px;height:1px;background:#000"></div>
<div style="position:absolute;left:609px;top:307px;width:38px;height:1px;background:#f0f0f0"></div>
<div style="position:absolute;left:607px;top:309px;width:42px;height:1px;background:#000"></div>
<div style="position:absolute;left:608px;top:310px;width:40px;height:9px;background:#0000ff"></div>
<div style="position:absolute;left:607px;top:319px;width:42px;height:1px;background:#000"></div>
<div style="position:absolute;left:609px;top:321px;width:38px;height:1px;background:#f0f0f0"></div>
<div style="position:absolute;left:607px;top:323px;width:42px;height:1px;background:#000"></div>
<div style="position:absolute;left:608px;top:324px;width:40px;height:9px;background:#0000ff"></div>
<div style="position:absolute;left:607px;top:333px;width:42px;height:1px;background:#000"></div>
<div style="position:absolute;left:609px;top:335px;width:38px;height:1px;background:#f0f0f0"></div>
<div style="position:absolute;left:607px;top:337px;width:42px;height:1px;background:#000"></div>
<div style="position:absolute;left:608px;top:338px;width:40px;height:9px;background:#0000ff"></div>
<div style="position:absolute;left:607px;top:347px;width:42px;height:1px;background:#000"></div>
<div style="position:absolute;left:609px;top:349px;width:38px;height:1px;background:#f0f0f0"></div>
<div style="position:absolute;left:607px;top:351px;width:42px;height:1px;background:#000"></div>
<div style="position:absolute;left:608px;top:352px;width:40px;height:9px;background:#0000ff"></div>
<div style="position:absolute;left:607px;top:361px;width:42px;height:1px;background:#000"></div>
<div style="position:absolute;left:609px;top:363px;width:38px;height:1px;background:#f0f0f0"></div>
<div style="position:absolute;left:607px;top:365px;width:42px;height:1px;background:#000"></div>
<div style="position:absolute;left:608px;top:366px;width:40px;height:9px;background:#0000ff"></div>
<div style="position:absolute;left:607px;top:375px;width:42px;height:1px;background:#000"></div>
<div style="position:absolute;left:609px;top:377px;width:38px;height:1px;background:#f0f0f0"></div>
<div style="position:absolute;left:607px;top:379px;width:42px;height:1px;background:#000"></div>
<div style="position:absolute;left:608px;top:380px;width:40px;height:9px;background:#0000ff"></div>
<div style="position:absolute;left:607px;top:389px;width:42px;height:1px;background:#000"></div>
<div style="position:absolute;left:609px;top:391px;width:38px;height:1px;background:#f0f0f0"></div>
<div style="position:absolute;left:607px;top:393px;width:42px;height:1px;background:#000"></div>
<div style="position:absolute;left:608px;top:394px;width:40px;height:9px;background:#0000ff"></div>
<div style="position:absolute;left:607px;top:403px;width:42px;height:1px;background:#000"></div>
<div style="position:absolute;left:609px;top:405px;width:38px;height:1px;background:#f0f0f0"></div>
<div style="position:absolute;left:607px;top:407px;width:42px;height:1px;background:#000"></div>
<div style="position:absolute;left:608px;top:408px;width:40px;height:9px;background:#0000ff"></div>
<div style="position:absolute;left:607px;top:417px;width:42px;height:1px;background:#000"></div>
<div style="position:absolute;left:609px;top:419px;width:38px;height:1px;background:#f0f0f0"></div>
<div style="position:absolute;left:607px;top:421px;width:42px;height:1px;background:#000"></div>
<div style="position:absolute;left:608px;top:422px;width:40px;height:9px;background:#0000ff"></div>
<div style="position:absolute;left:607px;top:431px;width:42px;height:1px;background:#000"></div>
<div style="position:absolute;left:609px;top:433px;width:38px;height:1px;background:#f0f0f0"></div>
<div style="position:absolute;left:607px;top:435px;width:42px;height:1px;background:#000"></div>
<div style="position:absolute;left:608px;top:436px;width:40px;height:9px;background:#0000ff"></div>
<div style="position:absolute;left:607px;top:445px;width:42px;height:1px;background:#000"></div>
<div style="position:absolute;left:609px;top:447px;width:38px;height:1px;background:#f0f0f0"></div>
<div style="position:absolute;left:607px;top:449px;width:42px;height:1px;background:#000"></div>
<div style="position:absolute;left:608px;top:450px;width:40px;height:9px;background:#0000ff"></div>
<div style="position:absolute;left:607px;top:459px;width:42px;height:1px;background:#000"></div>
<div style="position:absolute;left:609px;top:461px;width:38px;height:1px;background:#f0f0f0"></div>
<div style="position:absolute;left:607px;top:463px;width:42px;height:1px;background:#000"></div>
<div style="position:absolute;left:608px;top:464px;width:40px;height:9px;background:#0000ff"></div>
<div style="position:absolute;left:607px;top:473px;width:42px;height:1px;background:#000"></div>
<div style="position:absolute;left:602px;top:137px;width:47px;height:341px;border:1px solid #000;box-sizing:border-box"></div>
<div style="position:absolute;left:671px;top:137px;width:47px;height:341px;border:1px solid #000;box-sizing:border-box;box-shadow:0 0 0 1px #fff, inset 0 0 0 1px #fff;"></div>
<div style="position:absolute;left:671px;top:141px;width:42px;height:333px;background:#fff;border:1px solid #000;box-sizing:border-box;box-shadow:0 0 0 1px #fff"></div>
<div style="position:absolute;left:672px;top:142px;width:40px;height:9px;background:#fff"></div>
<div style="position:absolute;left:671px;top:151px;width:42px;height:1px;background:#000"></div>
<div style="position:absolute;left:673px;top:153px;width:38px;height:1px;background:#f0f0f0"></div>
<div style="position:absolute;left:671px;top:155px;width:42px;height:1px;background:#000"></div>
<div style="position:absolute;left:672px;top:156px;width:40px;height:9px;background:#fff"></div>
<div style="position:absolute;left:671px;top:165px;width:42px;height:1px;background:#000"></div>
<div style="position:absolute;left:673px;top:167px;width:38px;height:1px;background:#f0f0f0"></div>
<div style="position:absolute;left:671px;top:169px;width:42px;height:1px;background:#000"></div>
<div style="position:absolute;left:672px;top:170px;width:40px;height:9px;background:#fff"></div>
<div style="position:absolute;left:671px;top:179px;width:42px;height:1px;background:#000"></div>
<div style="position:absolute;left:673px;top:181px;width:38px;height:1px;background:#f0f0f0"></div>
<div style="position:absolute;left:671px;top:183px;width:42px;height:1px;background:#000"></div>
<div style="position:absolute;left:672px;top:184px;width:40px;height:9px;background:#fff"></div>
<div style="position:absolute;left:671px;top:193px;width:42px;height:1px;background:#000"></div>
<div style="position:absolute;left:673px;top:195px;width:38px;height:1px;background:#f0f0f0"></div>
<div style="position:absolute;left:671px;top:197px;width:42px;height:1px;background:#000"></div>
<div style="position:absolute;left:672px;top:198px;width:40px;height:9px;background:#0000ff"></div>
<div style="position:absolute;left:671px;top:207px;width:42px;height:1px;background:#000"></div>
<div style="position:absolute;left:673px;top:209px;width:38px;height:1px;background:#f0f0f0"></div>
<div style="position:absolute;left:671px;top:211px;width:42px;height:1px;background:#000"></div>
<div style="position:absolute;left:672px;top:212px;width:40px;height:9px;background:#0000ff"></div>
<div style="position:absolute;left:671px;top:221px;width:42px;height:1px;background:#000"></div>
<div style="position:absolute;left:673px;top:223px;width:38px;height:1px;background:#f0f0f0"></div>
<div style="position:absolute;left:671px;top:225px;width:42px;height:1px;background:#000"></div>
<div style="position:absolute;left:672px;top:226px;width:40px;height:9px;background:#0000ff"></div>
<div style="position:absolute;left:671px;top:235px;width:42px;height:1px;background:#000"></div>
<div style="position:absolute;left:673px;top:237px;width:38px;height:1px;background:#f0f0f0"></div>
<div style="position:absolute;left:671px;top:239px;width:42px;height:1px;background:#000"></div>
<div style="position:absolute;left:672px;top:240px;width:40px;height:9px;background:#0000ff"></div>
<div style="position:absolute;left:671px;top:249px;width:42px;height:1px;background:#000"></div>
<div style="position:absolute;left:673px;top:251px;width:38px;height:1px;background:#f0f0f0"></div>
<div style="position:absolute;left:671px;top:253px;width:42px;height:1px;background:#000"></div>
<div style="position:absolute;left:672px;top:254px;width:40px;height:9px;background:#0000ff"></div>
<div style="position:absolute;left:671px;top:263px;width:42px;height:1px;background:#000"></div>
<div style="position:absolute;left:673px;top:265px;width:38px;height:1px;background:#f0f0f0"></div>
<div style="position:absolute;left:671px;top:267px;width:42px;height:1px;background:#000"></div>
<div style="position:absolute;left:672px;top:268px;width:40px;height:9px;background:#0000ff"></div>
<div style="position:absolute;left:671px;top:277px;width:42px;height:1px;background:#000"></div>
<div style="position:absolute;left:673px;top:279px;width:38px;height:1px;background:#f0f0f0"></div>
<div style="position:absolute;left:671px;top:281px;width:42px;height:1px;background:#000"></div>
<div style="position:absolute;left:672px;top:282px;width:40px;height:9px;background:#0000ff"></div>
<div style="position:absolute;left:671px;top:291px;width:42px;height:1px;background:#000"></div>
<div style="position:absolute;left:673px;top:293px;width:38px;height:1px;background:#f0f0f0"></div>
<div style="position:absolute;left:671px;top:295px;width:42px;height:1px;background:#000"></div>
<div style="position:absolute;left:672px;top:296px;width:40px;height:9px;background:#0000ff"></div>
<div style="position:absolute;left:671px;top:305px;width:42px;height:1px;background:#000"></div>
<div style="position:absolute;left:673px;top:307px;width:38px;height:1px;background:#f0f0f0"></div>
<div style="position:absolute;left:671px;top:309px;width:42px;height:1px;background:#000"></div>
<div style="position:absolute;left:672px;top:310px;width:40px;height:9px;background:#0000ff"></div>
<div style="position:absolute;left:671px;top:319px;width:42px;height:1px;background:#000"></div>
<div style="position:absolute;left:673px;top:321px;width:38px;height:1px;background:#f0f0f0"></div>
<div style="position:absolute;left:671px;top:323px;width:42px;height:1px;background:#000"></div>
<div style="position:absolute;left:672px;top:324px;width:40px;height:9px;background:#0000ff"></div>
<div style="position:absolute;left:671px;top:333px;width:42px;height:1px;background:#000"></div>
<div style="position:absolute;left:673px;top:335px;width:38px;height:1px;background:#f0f0f0"></div>
<div style="position:absolute;left:671px;top:337px;width:42px;height:1px;background:#000"></div>
<div style="position:absolute;left:672px;top:338px;width:40px;height:9px;background:#0000ff"></div>
<div style="position:absolute;left:671px;top:347px;width:42px;height:1px;background:#000"></div>
<div style="position:absolute;left:673px;top:349px;width:38px;height:1px;background:#f0f0f0"></div>
<div style="position:absolute;left:671px;top:351px;width:42px;height:1px;background:#000"></div>
<div style="position:absolute;left:672px;top:352px;width:40px;height:9px;background:#0000ff"></div>
<div style="position:absolute;left:671px;top:361px;width:42px;height:1px;background:#000"></div>
<div style="position:absolute;left:673px;top:363px;width:38px;height:1px;background:#f0f0f0"></div>
<div style="position:absolute;left:671px;top:365px;width:42px;height:1px;background:#000"></div>
<div style="position:absolute;left:672px;top:366px;width:40px;height:9px;background:#0000ff"></div>
<div style="position:absolute;left:671px;top:375px;width:42px;height:1px;background:#000"></div>
<div style="position:absolute;left:673px;top:377px;width:38px;height:1px;background:#f0f0f0"></div>
<div style="position:absolute;left:671px;top:379px;width:42px;height:1px;background:#000"></div>
<div style="position:absolute;left:672px;top:380px;width:40px;height:9px;background:#0000ff"></div>
<div style="position:absolute;left:671px;top:389px;width:42px;height:1px;background:#000"></div>
<div style="position:absolute;left:673px;top:391px;width:38px;height:1px;background:#f0f0f0"></div>
<div style="position:absolute;left:671px;top:393px;width:42px;height:1px;background:#000"></div>
<div style="position:absolute;left:672px;top:394px;width:40px;height:9px;background:#0000ff"></div>
<div style="position:absolute;left:671px;top:403px;width:42px;height:1px;background:#000"></div>
<div style="position:absolute;left:673px;top:405px;width:38px;height:1px;background:#f0f0f0"></div>
<div style="position:absolute;left:671px;top:407px;width:42px;height:1px;background:#000"></div>
<div style="position:absolute;left:672px;top:408px;width:40px;height:9px;background:#0000ff"></div>
<div style="position:absolute;left:671px;top:417px;width:42px;height:1px;background:#000"></div>
<div style="position:absolute;left:673px;top:419px;width:38px;height:1px;background:#f0f0f0"></div>
<div style="position:absolute;left:671px;top:421px;width:42px;height:1px;background:#000"></div>
<div style="position:absolute;left:672px;top:422px;width:40px;height:9px;background:#0000ff"></div>
<div style="position:absolute;left:671px;top:431px;width:42px;height:1px;background:#000"></div>
<div style="position:absolute;left:673px;top:433px;width:38px;height:1px;background:#f0f0f0"></div>
<div style="position:absolute;left:671px;top:435px;width:42px;height:1px;background:#000"></div>
<div style="position:absolute;left:672px;top:436px;width:40px;height:9px;background:#0000ff"></div>
<div style="position:absolute;left:671px;top:445px;width:42px;height:1px;background:#000"></div>
<div style="position:absolute;left:673px;top:447px;width:38px;height:1px;background:#f0f0f0"></div>
<div style="position:absolute;left:671px;top:449px;width:42px;height:1px;background:#000"></div>
<div style="position:absolute;left:672px;top:450px;width:40px;height:9px;background:#0000ff"></div>
<div style="position:absolute;left:671px;top:459px;width:42px;height:1px;background:#000"></div>
<div style="position:absolute;left:673px;top:461px;width:38px;height:1px;background:#f0f0f0"></div>
<div style="position:absolute;left:671px;top:463px;width:42px;height:1px;background:#000"></div>
<div style="position:absolute;left:672px;top:464px;width:40px;height:9px;background:#0000ff"></div>
<div style="position:absolute;left:671px;top:473px;width:42px;height:1px;background:#000"></div>
<div style="position:absolute;left:671px;top:137px;width:47px;height:341px;border:1px solid #000;box-sizing:border-box"></div>
<svg style="position:absolute;left:608px;top:198px" width="10" height="10" shape-rendering="crispEdges"><rect x="2" y="0" width="5" height="1" fill="#000"/><rect x="1" y="1" width="7" height="1" fill="#000"/><rect x="0" y="2" width="9" height="1" fill="#000"/><rect x="0" y="3" width="10" height="1" fill="#000"/><rect x="0" y="4" width="10" height="1" fill="#000"/><rect x="0" y="5" width="10" height="1" fill="#000"/><rect x="0" y="6" width="10" height="1" fill="#000"/><rect x="0" y="7" width="9" height="1" fill="#000"/><rect x="1" y="8" width="7" height="1" fill="#000"/><rect x="2" y="9" width="5" height="1" fill="#000"/></svg>
<div style="position:absolute;left:745px;top:169px;width:21px;height:11px;background:#0000ff;border:1px solid #000;box-sizing:border-box;box-shadow:0 0 0 1px #fff"></div>
<div style="position:absolute;left:745px;top:253px;width:21px;height:11px;background:#fff;border:1px solid #000;box-sizing:border-box;box-shadow:0 0 0 1px #fff"></div>
<div style="position:absolute;left:745px;top:337px;width:21px;height:11px;background:#fff;border:1px solid #000;box-sizing:border-box;box-shadow:0 0 0 1px #fff"></div>
<div style="position:absolute;left:745px;top:421px;width:21px;height:11px;background:#fff;border:1px solid #000;box-sizing:border-box;box-shadow:0 0 0 1px #fff"></div>
<div style="position:absolute;left:600px;top:506px;width:121px;height:35px;border:1px solid #000;box-sizing:border-box;box-shadow:0 0 0 1px #fff, inset 0 0 0 1px #fff;"></div>
<div style="position:absolute;left:604px;top:509px;width:113px;height:29px;background:#fff"></div>
<svg style="position:absolute;left:605px;top:510px" width="111" height="27" shape-rendering="crispEdges"><rect x="0" y="0" width="13" height="1" fill="#000"/><rect x="13" y="0" width="1" height="1" fill="#fff"/><rect x="14" y="0" width="13" height="1" fill="#000"/><rect x="27" y="0" width="1" height="1" fill="#fff"/><rect x="28" y="0" width="13" height="1" fill="#000"/><rect x="41" y="0" width="1" height="1" fill="#fff"/><rect x="42" y="0" width="13" height="1" fill="#000"/><rect x="55" y="0" width="1" height="1" fill="#fff"/><rect x="56" y="0" width="13" height="1" fill="#000"/><rect x="69" y="0" width="1" height="1" fill="#fff"/><rect x="70" y="0" width="13" height="1" fill="#000"/><rect x="83" y="0" width="1" height="1" fill="#fff"/><rect x="84" y="0" width="13" height="1" fill="#000"/><rect x="97" y="0" width="1" height="1" fill="#fff"/><rect x="98" y="0" width="13" height="1" fill="#000"/><rect x="0" y="1" width="2" height="1" fill="#000"/><rect x="2" y="1" width="9" height="1" fill="#fff"/><rect x="11" y="1" width="2" height="1" fill="#000"/><rect x="13" y="1" width="1" height="1" fill="#fff"/><rect x="14" y="1" width="2" height="1" fill="#000"/><rect x="16" y="1" width="9" height="1" fill="#fff"/><rect x="25" y="1" width="2" height="1" fill="#000"/><rect x="27" y="1" width="1" height="1" fill="#fff"/><rect x="28" y="1" width="2" height="1" fill="#000"/><rect x="30" y="1" width="9" height="1" fill="#fff"/><rect x="39" y="1" width="2" height="1" fill="#000"/><rect x="41" y="1" width="1" height="1" fill="#fff"/><rect x="42" y="1" width="2" height="1" fill="#000"/><rect x="44" y="1" width="9" height="1" fill="#fff"/><rect x="53" y="1" width="2" height="1" fill="#000"/><rect x="55" y="1" width="1" height="1" fill="#fff"/><rect x="56" y="1" width="2" height="1" fill="#000"/><rect x="58" y="1" width="9" height="1" fill="#fff"/><rect x="67" y="1" width="2" height="1" fill="#000"/><rect x="69" y="1" width="1" height="1" fill="#fff"/><rect x="70" y="1" width="2" height="1" fill="#000"/><rect x="72" y="1" width="9" height="1" fill="#fff"/><rect x="81" y="1" width="2" height="1" fill="#000"/><rect x="83" y="1" width="1" height="1" fill="#fff"/><rect x="84" y="1" width="2" height="1" fill="#000"/><rect x="86" y="1" width="9" height="1" fill="#fff"/><rect x="95" y="1" width="2" height="1" fill="#000"/><rect x="97" y="1" width="1" height="1" fill="#fff"/><rect x="98" y="1" width="2" height="1" fill="#000"/><rect x="100" y="1" width="9" height="1" fill="#fff"/><rect x="109" y="1" width="2" height="1" fill="#000"/><rect x="0" y="2" width="1" height="1" fill="#000"/><rect x="1" y="2" width="1" height="1" fill="#fff"/><rect x="2" y="2" width="1" height="1" fill="#000"/><rect x="3" y="2" width="7" height="1" fill="#fff"/><rect x="10" y="2" width="1" height="1" fill="#000"/><rect x="11" y="2" width="1" height="1" fill="#fff"/><rect x="12" y="2" width="1" height="1" fill="#000"/><rect x="13" y="2" width="1" height="1" fill="#fff"/><rect x="14" y="2" width="1" height="1" fill="#000"/><rect x="15" y="2" width="1" height="1" fill="#fff"/><rect x="16" y="2" width="1" height="1" fill="#000"/><rect x="17" y="2" width="7" height="1" fill="#fff"/><rect x="24" y="2" width="1" height="1" fill="#000"/><rect x="25" y="2" width="1" height="1" fill="#fff"/><rect x="26" y="2" width="1" height="1" fill="#000"/><rect x="27" y="2" width="1" height="1" fill="#fff"/><rect x="28" y="2" width="1" height="1" fill="#000"/><rect x="29" y="2" width="1" height="1" fill="#fff"/><rect x="30" y="2" width="1" height="1" fill="#000"/><rect x="31" y="2" width="7" height="1" fill="#fff"/><rect x="38" y="2" width="1" height="1" fill="#000"/><rect x="39" y="2" width="1" height="1" fill="#fff"/><rect x="40" y="2" width="1" height="1" fill="#000"/><rect x="41" y="2" width="1" height="1" fill="#fff"/><rect x="42" y="2" width="1" height="1" fill="#000"/><rect x="43" y="2" width="1" height="1" fill="#fff"/><rect x="44" y="2" width="1" height="1" fill="#000"/><rect x="45" y="2" width="7" height="1" fill="#fff"/><rect x="52" y="2" width="1" height="1" fill="#000"/><rect x="53" y="2" width="1" height="1" fill="#fff"/><rect x="54" y="2" width="1" height="1" fill="#000"/><rect x="55" y="2" width="1" height="1" fill="#fff"/><rect x="56" y="2" width="1" height="1" fill="#000"/><rect x="57" y="2" width="1" height="1" fill="#fff"/><rect x="58" y="2" width="1" height="1" fill="#000"/><rect x="59" y="2" width="7" height="1" fill="#fff"/><rect x="66" y="2" width="1" height="1" fill="#000"/><rect x="67" y="2" width="1" height="1" fill="#fff"/><rect x="68" y="2" width="1" height="1" fill="#000"/><rect x="69" y="2" width="1" height="1" fill="#fff"/><rect x="70" y="2" width="1" height="1" fill="#000"/><rect x="71" y="2" width="1" height="1" fill="#fff"/><rect x="72" y="2" width="1" height="1" fill="#000"/><rect x="73" y="2" width="7" height="1" fill="#fff"/><rect x="80" y="2" width="1" height="1" fill="#000"/><rect x="81" y="2" width="1" height="1" fill="#fff"/><rect x="82" y="2" width="1" height="1" fill="#000"/><rect x="83" y="2" width="1" height="1" fill="#fff"/><rect x="84" y="2" width="1" height="1" fill="#000"/><rect x="85" y="2" width="1" height="1" fill="#fff"/><rect x="86" y="2" width="1" height="1" fill="#000"/><rect x="87" y="2" width="7" height="1" fill="#fff"/><rect x="94" y="2" width="1" height="1" fill="#000"/><rect x="95" y="2" width="1" height="1" fill="#fff"/><rect x="96" y="2" width="1" height="1" fill="#000"/><rect x="97" y="2" width="1" height="1" fill="#fff"/><rect x="98" y="2" width="1" height="1" fill="#000"/><rect x="99" y="2" width="1" height="1" fill="#fff"/><rect x="100" y="2" width="1" height="1" fill="#000"/><rect x="101" y="2" width="7" height="1" fill="#fff"/><rect x="108" y="2" width="1" height="1" fill="#000"/><rect x="109" y="2" width="1" height="1" fill="#fff"/><rect x="110" y="2" width="1" height="1" fill="#000"/><rect x="0" y="3" width="1" height="1" fill="#000"/><rect x="1" y="3" width="2" height="1" fill="#fff"/><rect x="3" y="3" width="7" height="1" fill="#000"/><rect x="10" y="3" width="2" height="1" fill="#fff"/><rect x="12" y="3" width="1" height="1" fill="#000"/><rect x="13" y="3" width="1" height="1" fill="#fff"/><rect x="14" y="3" width="1" height="1" fill="#000"/><rect x="15" y="3" width="2" height="1" fill="#fff"/><rect x="17" y="3" width="7" height="1" fill="#000"/><rect x="24" y="3" width="2" height="1" fill="#fff"/><rect x="26" y="3" width="1" height="1" fill="#000"/><rect x="27" y="3" width="1" height="1" fill="#fff"/><rect x="28" y="3" width="1" height="1" fill="#000"/><rect x="29" y="3" width="2" height="1" fill="#fff"/><rect x="31" y="3" width="7" height="1" fill="#000"/><rect x="38" y="3" width="2" height="1" fill="#fff"/><rect x="40" y="3" width="1" height="1" fill="#000"/><rect x="41" y="3" width="1" height="1" fill="#fff"/><rect x="42" y="3" width="1" height="1" fill="#000"/><rect x="43" y="3" width="2" height="1" fill="#fff"/><rect x="45" y="3" width="7" height="1" fill="#000"/><rect x="52" y="3" width="2" height="1" fill="#fff"/><rect x="54" y="3" width="1" height="1" fill="#000"/><rect x="55" y="3" width="1" height="1" fill="#fff"/><rect x="56" y="3" width="1" height="1" fill="#000"/><rect x="57" y="3" width="2" height="1" fill="#fff"/><rect x="59" y="3" width="7" height="1" fill="#000"/><rect x="66" y="3" width="2" height="1" fill="#fff"/><rect x="68" y="3" width="1" height="1" fill="#000"/><rect x="69" y="3" width="1" height="1" fill="#fff"/><rect x="70" y="3" width="1" height="1" fill="#000"/><rect x="71" y="3" width="2" height="1" fill="#fff"/><rect x="73" y="3" width="7" height="1" fill="#000"/><rect x="80" y="3" width="2" height="1" fill="#fff"/><rect x="82" y="3" width="1" height="1" fill="#000"/><rect x="83" y="3" width="1" height="1" fill="#fff"/><rect x="84" y="3" width="1" height="1" fill="#000"/><rect x="85" y="3" width="2" height="1" fill="#fff"/><rect x="87" y="3" width="7" height="1" fill="#000"/><rect x="94" y="3" width="2" height="1" fill="#fff"/><rect x="96" y="3" width="1" height="1" fill="#000"/><rect x="97" y="3" width="1" height="1" fill="#fff"/><rect x="98" y="3" width="1" height="1" fill="#000"/><rect x="99" y="3" width="2" height="1" fill="#fff"/><rect x="101" y="3" width="7" height="1" fill="#000"/><rect x="108" y="3" width="2" height="1" fill="#fff"/><rect x="110" y="3" width="1" height="1" fill="#000"/><rect x="0" y="4" width="1" height="1" fill="#000"/><rect x="1" y="4" width="2" height="1" fill="#fff"/><rect x="3" y="4" width="1" height="1" fill="#000"/><rect x="4" y="4" width="5" height="1" fill="#fff"/><rect x="9" y="4" width="1" height="1" fill="#000"/><rect x="10" y="4" width="2" height="1" fill="#fff"/><rect x="12" y="4" width="1" height="1" fill="#000"/><rect x="13" y="4" width="1" height="1" fill="#fff"/><rect x="14" y="4" width="1" height="1" fill="#000"/><rect x="15" y="4" width="2" height="1" fill="#fff"/><rect x="17" y="4" width="1" height="1" fill="#000"/><rect x="18" y="4" width="5" height="1" fill="#fff"/><rect x="23" y="4" width="1" height="1" fill="#000"/><rect x="24" y="4" width="2" height="1" fill="#fff"/><rect x="26" y="4" width="1" height="1" fill="#000"/><rect x="27" y="4" width="1" height="1" fill="#fff"/><rect x="28" y="4" width="1" height="1" fill="#000"/><rect x="29" y="4" width="2" height="1" fill="#fff"/><rect x="31" y="4" width="1" height="1" fill="#000"/><rect x="32" y="4" width="5" height="1" fill="#fff"/><rect x="37" y="4" width="1" height="1" fill="#000"/><rect x="38" y="4" width="2" height="1" fill="#fff"/><rect x="40" y="4" width="1" height="1" fill="#000"/><rect x="41" y="4" width="1" height="1" fill="#fff"/><rect x="42" y="4" width="1" height="1" fill="#000"/><rect x="43" y="4" width="2" height="1" fill="#fff"/><rect x="45" y="4" width="1" height="1" fill="#000"/><rect x="46" y="4" width="5" height="1" fill="#fff"/><rect x="51" y="4" width="1" height="1" fill="#000"/><rect x="52" y="4" width="2" height="1" fill="#fff"/><rect x="54" y="4" width="1" height="1" fill="#000"/><rect x="55" y="4" width="1" height="1" fill="#fff"/><rect x="56" y="4" width="1" height="1" fill="#000"/><rect x="57" y="4" width="2" height="1" fill="#fff"/><rect x="59" y="4" width="1" height="1" fill="#000"/><rect x="60" y="4" width="5" height="1" fill="#fff"/><rect x="65" y="4" width="1" height="1" fill="#000"/><rect x="66" y="4" width="2" height="1" fill="#fff"/><rect x="68" y="4" width="1" height="1" fill="#000"/><rect x="69" y="4" width="1" height="1" fill="#fff"/><rect x="70" y="4" width="1" height="1" fill="#000"/><rect x="71" y="4" width="2" height="1" fill="#fff"/><rect x="73" y="4" width="1" height="1" fill="#000"/><rect x="74" y="4" width="5" height="1" fill="#fff"/><rect x="79" y="4" width="1" height="1" fill="#000"/><rect x="80" y="4" width="2" height="1" fill="#fff"/><rect x="82" y="4" width="1" height="1" fill="#000"/><rect x="83" y="4" width="1" height="1" fill="#fff"/><rect x="84" y="4" width="1" height="1" fill="#000"/><rect x="85" y="4" width="2" height="1" fill="#fff"/><rect x="87" y="4" width="1" height="1" fill="#000"/><rect x="88" y="4" width="5" height="1" fill="#fff"/><rect x="93" y="4" width="1" height="1" fill="#000"/><rect x="94" y="4" width="2" height="1" fill="#fff"/><rect x="96" y="4" width="1" height="1" fill="#000"/><rect x="97" y="4" width="1" height="1" fill="#fff"/><rect x="98" y="4" width="1" height="1" fill="#000"/><rect x="99" y="4" width="2" height="1" fill="#fff"/><rect x="101" y="4" width="1" height="1" fill="#000"/><rect x="102" y="4" width="5" height="1" fill="#fff"/><rect x="107" y="4" width="1" height="1" fill="#000"/><rect x="108" y="4" width="2" height="1" fill="#fff"/><rect x="110" y="4" width="1" height="1" fill="#000"/><rect x="0" y="5" width="1" height="1" fill="#000"/><rect x="1" y="5" width="2" height="1" fill="#fff"/><rect x="3" y="5" width="1" height="1" fill="#000"/><rect x="4" y="5" width="1" height="1" fill="#fff"/><rect x="5" y="5" width="3" height="1" fill="#f0f0f0"/><rect x="8" y="5" width="1" height="1" fill="#fff"/><rect x="9" y="5" width="1" height="1" fill="#000"/><rect x="10" y="5" width="2" height="1" fill="#fff"/><rect x="12" y="5" width="1" height="1" fill="#000"/><rect x="13" y="5" width="1" height="1" fill="#fff"/><rect x="14" y="5" width="1" height="1" fill="#000"/><rect x="15" y="5" width="2" height="1" fill="#fff"/><rect x="17" y="5" width="1" height="1" fill="#000"/><rect x="18" y="5" width="1" height="1" fill="#fff"/><rect x="19" y="5" width="3" height="1" fill="#f0f0f0"/><rect x="22" y="5" width="1" height="1" fill="#fff"/><rect x="23" y="5" width="1" height="1" fill="#000"/><rect x="24" y="5" width="2" height="1" fill="#fff"/><rect x="26" y="5" width="1" height="1" fill="#000"/><rect x="27" y="5" width="1" height="1" fill="#fff"/><rect x="28" y="5" width="1" height="1" fill="#000"/><rect x="29" y="5" width="2" height="1" fill="#fff"/><rect x="31" y="5" width="1" height="1" fill="#000"/><rect x="32" y="5" width="1" height="1" fill="#fff"/><rect x="33" y="5" width="3" height="1" fill="#f0f0f0"/><rect x="36" y="5" width="1" height="1" fill="#fff"/><rect x="37" y="5" width="1" height="1" fill="#000"/><rect x="38" y="5" width="2" height="1" fill="#fff"/><rect x="40" y="5" width="1" height="1" fill="#000"/><rect x="41" y="5" width="1" height="1" fill="#fff"/><rect x="42" y="5" width="1" height="1" fill="#000"/><rect x="43" y="5" width="2" height="1" fill="#fff"/><rect x="45" y="5" width="1" height="1" fill="#000"/><rect x="46" y="5" width="1" height="1" fill="#fff"/><rect x="47" y="5" width="3" height="1" fill="#f0f0f0"/><rect x="50" y="5" width="1" height="1" fill="#fff"/><rect x="51" y="5" width="1" height="1" fill="#000"/><rect x="52" y="5" width="2" height="1" fill="#fff"/><rect x="54" y="5" width="1" height="1" fill="#000"/><rect x="55" y="5" width="1" height="1" fill="#fff"/><rect x="56" y="5" width="1" height="1" fill="#000"/><rect x="57" y="5" width="2" height="1" fill="#fff"/><rect x="59" y="5" width="1" height="1" fill="#000"/><rect x="60" y="5" width="1" height="1" fill="#fff"/><rect x="61" y="5" width="3" height="1" fill="#f0f0f0"/><rect x="64" y="5" width="1" height="1" fill="#fff"/><rect x="65" y="5" width="1" height="1" fill="#000"/><rect x="66" y="5" width="2" height="1" fill="#fff"/><rect x="68" y="5" width="1" height="1" fill="#000"/><rect x="69" y="5" width="1" height="1" fill="#fff"/><rect x="70" y="5" width="1" height="1" fill="#000"/><rect x="71" y="5" width="2" height="1" fill="#fff"/><rect x="73" y="5" width="1" height="1" fill="#000"/><rect x="74" y="5" width="1" height="1" fill="#fff"/><rect x="75" y="5" width="3" height="1" fill="#f0f0f0"/><rect x="78" y="5" width="1" height="1" fill="#fff"/><rect x="79" y="5" width="1" height="1" fill="#000"/><rect x="80" y="5" width="2" height="1" fill="#fff"/><rect x="82" y="5" width="1" height="1" fill="#000"/><rect x="83" y="5" width="1" height="1" fill="#fff"/><rect x="84" y="5" width="1" height="1" fill="#000"/><rect x="85" y="5" width="2" height="1" fill="#fff"/><rect x="87" y="5" width="1" height="1" fill="#000"/><rect x="88" y="5" width="1" height="1" fill="#fff"/><rect x="89" y="5" width="3" height="1" fill="#f0f0f0"/><rect x="92" y="5" width="1" height="1" fill="#fff"/><rect x="93" y="5" width="1" height="1" fill="#000"/><rect x="94" y="5" width="2" height="1" fill="#fff"/><rect x="96" y="5" width="1" height="1" fill="#000"/><rect x="97" y="5" width="1" height="1" fill="#fff"/><rect x="98" y="5" width="1" height="1" fill="#000"/><rect x="99" y="5" width="2" height="1" fill="#fff"/><rect x="101" y="5" width="1" height="1" fill="#000"/><rect x="102" y="5" width="1" height="1" fill="#fff"/><rect x="103" y="5" width="3" height="1" fill="#f0f0f0"/><rect x="106" y="5" width="1" height="1" fill="#fff"/><rect x="107" y="5" width="1" height="1" fill="#000"/><rect x="108" y="5" width="2" height="1" fill="#fff"/><rect x="110" y="5" width="1" height="1" fill="#000"/><rect x="0" y="6" width="1" height="1" fill="#000"/><rect x="1" y="6" width="2" height="1" fill="#fff"/><rect x="3" y="6" width="1" height="1" fill="#000"/><rect x="4" y="6" width="1" height="1" fill="#fff"/><rect x="5" y="6" width="3" height="1" fill="#f0f0f0"/><rect x="8" y="6" width="1" height="1" fill="#fff"/><rect x="9" y="6" width="1" height="1" fill="#000"/><rect x="10" y="6" width="2" height="1" fill="#fff"/><rect x="12" y="6" width="1" height="1" fill="#000"/><rect x="13" y="6" width="1" height="1" fill="#fff"/><rect x="14" y="6" width="1" height="1" fill="#000"/><rect x="15" y="6" width="2" height="1" fill="#fff"/><rect x="17" y="6" width="1" height="1" fill="#000"/><rect x="18" y="6" width="1" height="1" fill="#fff"/><rect x="19" y="6" width="3" height="1" fill="#f0f0f0"/><rect x="22" y="6" width="1" height="1" fill="#fff"/><rect x="23" y="6" width="1" height="1" fill="#000"/><rect x="24" y="6" width="2" height="1" fill="#fff"/><rect x="26" y="6" width="1" height="1" fill="#000"/><rect x="27" y="6" width="1" height="1" fill="#fff"/><rect x="28" y="6" width="1" height="1" fill="#000"/><rect x="29" y="6" width="2" height="1" fill="#fff"/><rect x="31" y="6" width="1" height="1" fill="#000"/><rect x="32" y="6" width="1" height="1" fill="#fff"/><rect x="33" y="6" width="3" height="1" fill="#f0f0f0"/><rect x="36" y="6" width="1" height="1" fill="#fff"/><rect x="37" y="6" width="1" height="1" fill="#000"/><rect x="38" y="6" width="2" height="1" fill="#fff"/><rect x="40" y="6" width="1" height="1" fill="#000"/><rect x="41" y="6" width="1" height="1" fill="#fff"/><rect x="42" y="6" width="1" height="1" fill="#000"/><rect x="43" y="6" width="2" height="1" fill="#fff"/><rect x="45" y="6" width="1" height="1" fill="#000"/><rect x="46" y="6" width="1" height="1" fill="#fff"/><rect x="47" y="6" width="3" height="1" fill="#f0f0f0"/><rect x="50" y="6" width="1" height="1" fill="#fff"/><rect x="51" y="6" width="1" height="1" fill="#000"/><rect x="52" y="6" width="2" height="1" fill="#fff"/><rect x="54" y="6" width="1" height="1" fill="#000"/><rect x="55" y="6" width="1" height="1" fill="#fff"/><rect x="56" y="6" width="1" height="1" fill="#000"/><rect x="57" y="6" width="2" height="1" fill="#fff"/><rect x="59" y="6" width="1" height="1" fill="#000"/><rect x="60" y="6" width="1" height="1" fill="#fff"/><rect x="61" y="6" width="3" height="1" fill="#f0f0f0"/><rect x="64" y="6" width="1" height="1" fill="#fff"/><rect x="65" y="6" width="1" height="1" fill="#000"/><rect x="66" y="6" width="2" height="1" fill="#fff"/><rect x="68" y="6" width="1" height="1" fill="#000"/><rect x="69" y="6" width="1" height="1" fill="#fff"/><rect x="70" y="6" width="1" height="1" fill="#000"/><rect x="71" y="6" width="2" height="1" fill="#fff"/><rect x="73" y="6" width="1" height="1" fill="#000"/><rect x="74" y="6" width="1" height="1" fill="#fff"/><rect x="75" y="6" width="3" height="1" fill="#f0f0f0"/><rect x="78" y="6" width="1" height="1" fill="#fff"/><rect x="79" y="6" width="1" height="1" fill="#000"/><rect x="80" y="6" width="2" height="1" fill="#fff"/><rect x="82" y="6" width="1" height="1" fill="#000"/><rect x="83" y="6" width="1" height="1" fill="#fff"/><rect x="84" y="6" width="1" height="1" fill="#000"/><rect x="85" y="6" width="2" height="1" fill="#fff"/><rect x="87" y="6" width="1" height="1" fill="#000"/><rect x="88" y="6" width="1" height="1" fill="#fff"/><rect x="89" y="6" width="3" height="1" fill="#f0f0f0"/><rect x="92" y="6" width="1" height="1" fill="#fff"/><rect x="93" y="6" width="1" height="1" fill="#000"/><rect x="94" y="6" width="2" height="1" fill="#fff"/><rect x="96" y="6" width="1" height="1" fill="#000"/><rect x="97" y="6" width="1" height="1" fill="#fff"/><rect x="98" y="6" width="1" height="1" fill="#000"/><rect x="99" y="6" width="2" height="1" fill="#fff"/><rect x="101" y="6" width="1" height="1" fill="#000"/><rect x="102" y="6" width="1" height="1" fill="#fff"/><rect x="103" y="6" width="3" height="1" fill="#f0f0f0"/><rect x="106" y="6" width="1" height="1" fill="#fff"/><rect x="107" y="6" width="1" height="1" fill="#000"/><rect x="108" y="6" width="2" height="1" fill="#fff"/><rect x="110" y="6" width="1" height="1" fill="#000"/><rect x="0" y="7" width="1" height="1" fill="#000"/><rect x="1" y="7" width="2" height="1" fill="#fff"/><rect x="3" y="7" width="1" height="1" fill="#000"/><rect x="4" y="7" width="1" height="1" fill="#fff"/><rect x="5" y="7" width="3" height="1" fill="#f0f0f0"/><rect x="8" y="7" width="1" height="1" fill="#fff"/><rect x="9" y="7" width="1" height="1" fill="#000"/><rect x="10" y="7" width="2" height="1" fill="#fff"/><rect x="12" y="7" width="1" height="1" fill="#000"/><rect x="13" y="7" width="1" height="1" fill="#fff"/><rect x="14" y="7" width="1" height="1" fill="#000"/><rect x="15" y="7" width="2" height="1" fill="#fff"/><rect x="17" y="7" width="1" height="1" fill="#000"/><rect x="18" y="7" width="1" height="1" fill="#fff"/><rect x="19" y="7" width="3" height="1" fill="#f0f0f0"/><rect x="22" y="7" width="1" height="1" fill="#fff"/><rect x="23" y="7" width="1" height="1" fill="#000"/><rect x="24" y="7" width="2" height="1" fill="#fff"/><rect x="26" y="7" width="1" height="1" fill="#000"/><rect x="27" y="7" width="1" height="1" fill="#fff"/><rect x="28" y="7" width="1" height="1" fill="#000"/><rect x="29" y="7" width="2" height="1" fill="#fff"/><rect x="31" y="7" width="1" height="1" fill="#000"/><rect x="32" y="7" width="1" height="1" fill="#fff"/><rect x="33" y="7" width="3" height="1" fill="#f0f0f0"/><rect x="36" y="7" width="1" height="1" fill="#fff"/><rect x="37" y="7" width="1" height="1" fill="#000"/><rect x="38" y="7" width="2" height="1" fill="#fff"/><rect x="40" y="7" width="1" height="1" fill="#000"/><rect x="41" y="7" width="1" height="1" fill="#fff"/><rect x="42" y="7" width="1" height="1" fill="#000"/><rect x="43" y="7" width="2" height="1" fill="#fff"/><rect x="45" y="7" width="1" height="1" fill="#000"/><rect x="46" y="7" width="1" height="1" fill="#fff"/><rect x="47" y="7" width="3" height="1" fill="#f0f0f0"/><rect x="50" y="7" width="1" height="1" fill="#fff"/><rect x="51" y="7" width="1" height="1" fill="#000"/><rect x="52" y="7" width="2" height="1" fill="#fff"/><rect x="54" y="7" width="1" height="1" fill="#000"/><rect x="55" y="7" width="1" height="1" fill="#fff"/><rect x="56" y="7" width="1" height="1" fill="#000"/><rect x="57" y="7" width="2" height="1" fill="#fff"/><rect x="59" y="7" width="1" height="1" fill="#000"/><rect x="60" y="7" width="1" height="1" fill="#fff"/><rect x="61" y="7" width="3" height="1" fill="#f0f0f0"/><rect x="64" y="7" width="1" height="1" fill="#fff"/><rect x="65" y="7" width="1" height="1" fill="#000"/><rect x="66" y="7" width="2" height="1" fill="#fff"/><rect x="68" y="7" width="1" height="1" fill="#000"/><rect x="69" y="7" width="1" height="1" fill="#fff"/><rect x="70" y="7" width="1" height="1" fill="#000"/><rect x="71" y="7" width="2" height="1" fill="#fff"/><rect x="73" y="7" width="1" height="1" fill="#000"/><rect x="74" y="7" width="1" height="1" fill="#fff"/><rect x="75" y="7" width="3" height="1" fill="#f0f0f0"/><rect x="78" y="7" width="1" height="1" fill="#fff"/><rect x="79" y="7" width="1" height="1" fill="#000"/><rect x="80" y="7" width="2" height="1" fill="#fff"/><rect x="82" y="7" width="1" height="1" fill="#000"/><rect x="83" y="7" width="1" height="1" fill="#fff"/><rect x="84" y="7" width="1" height="1" fill="#000"/><rect x="85" y="7" width="2" height="1" fill="#fff"/><rect x="87" y="7" width="1" height="1" fill="#000"/><rect x="88" y="7" width="1" height="1" fill="#fff"/><rect x="89" y="7" width="3" height="1" fill="#f0f0f0"/><rect x="92" y="7" width="1" height="1" fill="#fff"/><rect x="93" y="7" width="1" height="1" fill="#000"/><rect x="94" y="7" width="2" height="1" fill="#fff"/><rect x="96" y="7" width="1" height="1" fill="#000"/><rect x="97" y="7" width="1" height="1" fill="#fff"/><rect x="98" y="7" width="1" height="1" fill="#000"/><rect x="99" y="7" width="2" height="1" fill="#fff"/><rect x="101" y="7" width="1" height="1" fill="#000"/><rect x="102" y="7" width="1" height="1" fill="#fff"/><rect x="103" y="7" width="3" height="1" fill="#f0f0f0"/><rect x="106" y="7" width="1" height="1" fill="#fff"/><rect x="107" y="7" width="1" height="1" fill="#000"/><rect x="108" y="7" width="2" height="1" fill="#fff"/><rect x="110" y="7" width="1" height="1" fill="#000"/><rect x="0" y="8" width="1" height="1" fill="#000"/><rect x="1" y="8" width="2" height="1" fill="#fff"/><rect x="3" y="8" width="1" height="1" fill="#000"/><rect x="4" y="8" width="5" height="1" fill="#fff"/><rect x="9" y="8" width="1" height="1" fill="#000"/><rect x="10" y="8" width="2" height="1" fill="#fff"/><rect x="12" y="8" width="1" height="1" fill="#000"/><rect x="13" y="8" width="1" height="1" fill="#fff"/><rect x="14" y="8" width="1" height="1" fill="#000"/><rect x="15" y="8" width="2" height="1" fill="#fff"/><rect x="17" y="8" width="1" height="1" fill="#000"/><rect x="18" y="8" width="5" height="1" fill="#fff"/><rect x="23" y="8" width="1" height="1" fill="#000"/><rect x="24" y="8" width="2" height="1" fill="#fff"/><rect x="26" y="8" width="1" height="1" fill="#000"/><rect x="27" y="8" width="1" height="1" fill="#fff"/><rect x="28" y="8" width="1" height="1" fill="#000"/><rect x="29" y="8" width="2" height="1" fill="#fff"/><rect x="31" y="8" width="1" height="1" fill="#000"/><rect x="32" y="8" width="5" height="1" fill="#fff"/><rect x="37" y="8" width="1" height="1" fill="#000"/><rect x="38" y="8" width="2" height="1" fill="#fff"/><rect x="40" y="8" width="1" height="1" fill="#000"/><rect x="41" y="8" width="1" height="1" fill="#fff"/><rect x="42" y="8" width="1" height="1" fill="#000"/><rect x="43" y="8" width="2" height="1" fill="#fff"/><rect x="45" y="8" width="1" height="1" fill="#000"/><rect x="46" y="8" width="5" height="1" fill="#fff"/><rect x="51" y="8" width="1" height="1" fill="#000"/><rect x="52" y="8" width="2" height="1" fill="#fff"/><rect x="54" y="8" width="1" height="1" fill="#000"/><rect x="55" y="8" width="1" height="1" fill="#fff"/><rect x="56" y="8" width="1" height="1" fill="#000"/><rect x="57" y="8" width="2" height="1" fill="#fff"/><rect x="59" y="8" width="1" height="1" fill="#000"/><rect x="60" y="8" width="5" height="1" fill="#fff"/><rect x="65" y="8" width="1" height="1" fill="#000"/><rect x="66" y="8" width="2" height="1" fill="#fff"/><rect x="68" y="8" width="1" height="1" fill="#000"/><rect x="69" y="8" width="1" height="1" fill="#fff"/><rect x="70" y="8" width="1" height="1" fill="#000"/><rect x="71" y="8" width="2" height="1" fill="#fff"/><rect x="73" y="8" width="1" height="1" fill="#000"/><rect x="74" y="8" width="5" height="1" fill="#fff"/><rect x="79" y="8" width="1" height="1" fill="#000"/><rect x="80" y="8" width="2" height="1" fill="#fff"/><rect x="82" y="8" width="1" height="1" fill="#000"/><rect x="83" y="8" width="1" height="1" fill="#fff"/><rect x="84" y="8" width="1" height="1" fill="#000"/><rect x="85" y="8" width="2" height="1" fill="#fff"/><rect x="87" y="8" width="1" height="1" fill="#000"/><rect x="88" y="8" width="5" height="1" fill="#fff"/><rect x="93" y="8" width="1" height="1" fill="#000"/><rect x="94" y="8" width="2" height="1" fill="#fff"/><rect x="96" y="8" width="1" height="1" fill="#000"/><rect x="97" y="8" width="1" height="1" fill="#fff"/><rect x="98" y="8" width="1" height="1" fill="#000"/><rect x="99" y="8" width="2" height="1" fill="#fff"/><rect x="101" y="8" width="1" height="1" fill="#000"/><rect x="102" y="8" width="5" height="1" fill="#fff"/><rect x="107" y="8" width="1" height="1" fill="#000"/><rect x="108" y="8" width="2" height="1" fill="#fff"/><rect x="110" y="8" width="1" height="1" fill="#000"/><rect x="0" y="9" width="1" height="1" fill="#000"/><rect x="1" y="9" width="2" height="1" fill="#fff"/><rect x="3" y="9" width="7" height="1" fill="#000"/><rect x="10" y="9" width="2" height="1" fill="#fff"/><rect x="12" y="9" width="1" height="1" fill="#000"/><rect x="13" y="9" width="1" height="1" fill="#fff"/><rect x="14" y="9" width="1" height="1" fill="#000"/><rect x="15" y="9" width="2" height="1" fill="#fff"/><rect x="17" y="9" width="7" height="1" fill="#000"/><rect x="24" y="9" width="2" height="1" fill="#fff"/><rect x="26" y="9" width="1" height="1" fill="#000"/><rect x="27" y="9" width="1" height="1" fill="#fff"/><rect x="28" y="9" width="1" height="1" fill="#000"/><rect x="29" y="9" width="2" height="1" fill="#fff"/><rect x="31" y="9" width="7" height="1" fill="#000"/><rect x="38" y="9" width="2" height="1" fill="#fff"/><rect x="40" y="9" width="1" height="1" fill="#000"/><rect x="41" y="9" width="1" height="1" fill="#fff"/><rect x="42" y="9" width="1" height="1" fill="#000"/><rect x="43" y="9" width="2" height="1" fill="#fff"/><rect x="45" y="9" width="7" height="1" fill="#000"/><rect x="52" y="9" width="2" height="1" fill="#fff"/><rect x="54" y="9" width="1" height="1" fill="#000"/><rect x="55" y="9" width="1" height="1" fill="#fff"/><rect x="56" y="9" width="1" height="1" fill="#000"/><rect x="57" y="9" width="2" height="1" fill="#fff"/><rect x="59" y="9" width="7" height="1" fill="#000"/><rect x="66" y="9" width="2" height="1" fill="#fff"/><rect x="68" y="9" width="1" height="1" fill="#000"/><rect x="69" y="9" width="1" height="1" fill="#fff"/><rect x="70" y="9" width="1" height="1" fill="#000"/><rect x="71" y="9" width="2" height="1" fill="#fff"/><rect x="73" y="9" width="7" height="1" fill="#000"/><rect x="80" y="9" width="2" height="1" fill="#fff"/><rect x="82" y="9" width="1" height="1" fill="#000"/><rect x="83" y="9" width="1" height="1" fill="#fff"/><rect x="84" y="9" width="1" height="1" fill="#000"/><rect x="85" y="9" width="2" height="1" fill="#fff"/><rect x="87" y="9" width="7" height="1" fill="#000"/><rect x="94" y="9" width="2" height="1" fill="#fff"/><rect x="96" y="9" width="1" height="1" fill="#000"/><rect x="97" y="9" width="1" height="1" fill="#fff"/><rect x="98" y="9" width="1" height="1" fill="#000"/><rect x="99" y="9" width="2" height="1" fill="#fff"/><rect x="101" y="9" width="7" height="1" fill="#000"/><rect x="108" y="9" width="2" height="1" fill="#fff"/><rect x="110" y="9" width="1" height="1" fill="#000"/><rect x="0" y="10" width="1" height="1" fill="#000"/><rect x="1" y="10" width="1" height="1" fill="#fff"/><rect x="2" y="10" width="1" height="1" fill="#000"/><rect x="3" y="10" width="7" height="1" fill="#fff"/><rect x="10" y="10" width="1" height="1" fill="#000"/><rect x="11" y="10" width="1" height="1" fill="#fff"/><rect x="12" y="10" width="1" height="1" fill="#000"/><rect x="13" y="10" width="1" height="1" fill="#fff"/><rect x="14" y="10" width="1" height="1" fill="#000"/><rect x="15" y="10" width="1" height="1" fill="#fff"/><rect x="16" y="10" width="1" height="1" fill="#000"/><rect x="17" y="10" width="7" height="1" fill="#fff"/><rect x="24" y="10" width="1" height="1" fill="#000"/><rect x="25" y="10" width="1" height="1" fill="#fff"/><rect x="26" y="10" width="1" height="1" fill="#000"/><rect x="27" y="10" width="1" height="1" fill="#fff"/><rect x="28" y="10" width="1" height="1" fill="#000"/><rect x="29" y="10" width="1" height="1" fill="#fff"/><rect x="30" y="10" width="1" height="1" fill="#000"/><rect x="31" y="10" width="7" height="1" fill="#fff"/><rect x="38" y="10" width="1" height="1" fill="#000"/><rect x="39" y="10" width="1" height="1" fill="#fff"/><rect x="40" y="10" width="1" height="1" fill="#000"/><rect x="41" y="10" width="1" height="1" fill="#fff"/><rect x="42" y="10" width="1" height="1" fill="#000"/><rect x="43" y="10" width="1" height="1" fill="#fff"/><rect x="44" y="10" width="1" height="1" fill="#000"/><rect x="45" y="10" width="7" height="1" fill="#fff"/><rect x="52" y="10" width="1" height="1" fill="#000"/><rect x="53" y="10" width="1" height="1" fill="#fff"/><rect x="54" y="10" width="1" height="1" fill="#000"/><rect x="55" y="10" width="1" height="1" fill="#fff"/><rect x="56" y="10" width="1" height="1" fill="#000"/><rect x="57" y="10" width="1" height="1" fill="#fff"/><rect x="58" y="10" width="1" height="1" fill="#000"/><rect x="59" y="10" width="7" height="1" fill="#fff"/><rect x="66" y="10" width="1" height="1" fill="#000"/><rect x="67" y="10" width="1" height="1" fill="#fff"/><rect x="68" y="10" width="1" height="1" fill="#000"/><rect x="69" y="10" width="1" height="1" fill="#fff"/><rect x="70" y="10" width="1" height="1" fill="#000"/><rect x="71" y="10" width="1" height="1" fill="#fff"/><rect x="72" y="10" width="1" height="1" fill="#000"/><rect x="73" y="10" width="7" height="1" fill="#fff"/><rect x="80" y="10" width="1" height="1" fill="#000"/><rect x="81" y="10" width="1" height="1" fill="#fff"/><rect x="82" y="10" width="1" height="1" fill="#000"/><rect x="83" y="10" width="1" height="1" fill="#fff"/><rect x="84" y="10" width="1" height="1" fill="#000"/><rect x="85" y="10" width="1" height="1" fill="#fff"/><rect x="86" y="10" width="1" height="1" fill="#000"/><rect x="87" y="10" width="7" height="1" fill="#fff"/><rect x="94" y="10" width="1" height="1" fill="#000"/><rect x="95" y="10" width="1" height="1" fill="#fff"/><rect x="96" y="10" width="1" height="1" fill="#000"/><rect x="97" y="10" width="1" height="1" fill="#fff"/><rect x="98" y="10" width="1" height="1" fill="#000"/><rect x="99" y="10" width="1" height="1" fill="#fff"/><rect x="100" y="10" width="1" height="1" fill="#000"/><rect x="101" y="10" width="7" height="1" fill="#fff"/><rect x="108" y="10" width="1" height="1" fill="#000"/><rect x="109" y="10" width="1" height="1" fill="#fff"/><rect x="110" y="10" width="1" height="1" fill="#000"/><rect x="0" y="11" width="2" height="1" fill="#000"/><rect x="2" y="11" width="9" height="1" fill="#fff"/><rect x="11" y="11" width="2" height="1" fill="#000"/><rect x="13" y="11" width="1" height="1" fill="#fff"/><rect x="14" y="11" width="2" height="1" fill="#000"/><rect x="16" y="11" width="9" height="1" fill="#fff"/><rect x="25" y="11" width="2" height="1" fill="#000"/><rect x="27" y="11" width="1" height="1" fill="#fff"/><rect x="28" y="11" width="2" height="1" fill="#000"/><rect x="30" y="11" width="9" height="1" fill="#fff"/><rect x="39" y="11" width="2" height="1" fill="#000"/><rect x="41" y="11" width="1" height="1" fill="#fff"/><rect x="42" y="11" width="2" height="1" fill="#000"/><rect x="44" y="11" width="9" height="1" fill="#fff"/><rect x="53" y="11" width="2" height="1" fill="#000"/><rect x="55" y="11" width="1" height="1" fill="#fff"/><rect x="56" y="11" width="2" height="1" fill="#000"/><rect x="58" y="11" width="9" height="1" fill="#fff"/><rect x="67" y="11" width="2" height="1" fill="#000"/><rect x="69" y="11" width="1" height="1" fill="#fff"/><rect x="70" y="11" width="2" height="1" fill="#000"/><rect x="72" y="11" width="9" height="1" fill="#fff"/><rect x="81" y="11" width="2" height="1" fill="#000"/><rect x="83" y="11" width="1" height="1" fill="#fff"/><rect x="84" y="11" width="2" height="1" fill="#000"/><rect x="86" y="11" width="9" height="1" fill="#fff"/><rect x="95" y="11" width="2" height="1" fill="#000"/><rect x="97" y="11" width="1" height="1" fill="#fff"/><rect x="98" y="11" width="2" height="1" fill="#000"/><rect x="100" y="11" width="9" height="1" fill="#fff"/><rect x="109" y="11" width="2" height="1" fill="#000"/><rect x="0" y="12" width="13" height="1" fill="#000"/><rect x="13" y="12" width="1" height="1" fill="#fff"/><rect x="14" y="12" width="13" height="1" fill="#000"/><rect x="27" y="12" width="1" height="1" fill="#fff"/><rect x="28" y="12" width="13" height="1" fill="#000"/><rect x="41" y="12" width="1" height="1" fill="#fff"/><rect x="42" y="12" width="13" height="1" fill="#000"/><rect x="55" y="12" width="1" height="1" fill="#fff"/><rect x="56" y="12" width="13" height="1" fill="#000"/><rect x="69" y="12" width="1" height="1" fill="#fff"/><rect x="70" y="12" width="13" height="1" fill="#000"/><rect x="83" y="12" width="1" height="1" fill="#fff"/><rect x="84" y="12" width="13" height="1" fill="#000"/><rect x="97" y="12" width="1" height="1" fill="#fff"/><rect x="98" y="12" width="13" height="1" fill="#000"/><rect x="0" y="13" width="111" height="1" fill="#fff"/><rect x="0" y="14" width="13" height="1" fill="#000"/><rect x="13" y="14" width="1" height="1" fill="#fff"/><rect x="14" y="14" width="13" height="1" fill="#000"/><rect x="27" y="14" width="1" height="1" fill="#fff"/><rect x="28" y="14" width="13" height="1" fill="#000"/><rect x="41" y="14" width="1" height="1" fill="#fff"/><rect x="42" y="14" width="13" height="1" fill="#000"/><rect x="55" y="14" width="1" height="1" fill="#fff"/><rect x="56" y="14" width="13" height="1" fill="#000"/><rect x="69" y="14" width="1" height="1" fill="#fff"/><rect x="70" y="14" width="13" height="1" fill="#000"/><rect x="83" y="14" width="1" height="1" fill="#fff"/><rect x="84" y="14" width="13" height="1" fill="#000"/><rect x="97" y="14" width="1" height="1" fill="#fff"/><rect x="98" y="14" width="13" height="1" fill="#000"/><rect x="0" y="15" width="2" height="1" fill="#000"/><rect x="2" y="15" width="9" height="1" fill="#fff"/><rect x="11" y="15" width="2" height="1" fill="#000"/><rect x="13" y="15" width="1" height="1" fill="#fff"/><rect x="14" y="15" width="2" height="1" fill="#000"/><rect x="16" y="15" width="9" height="1" fill="#fff"/><rect x="25" y="15" width="2" height="1" fill="#000"/><rect x="27" y="15" width="1" height="1" fill="#fff"/><rect x="28" y="15" width="2" height="1" fill="#000"/><rect x="30" y="15" width="9" height="1" fill="#fff"/><rect x="39" y="15" width="2" height="1" fill="#000"/><rect x="41" y="15" width="1" height="1" fill="#fff"/><rect x="42" y="15" width="2" height="1" fill="#000"/><rect x="44" y="15" width="9" height="1" fill="#fff"/><rect x="53" y="15" width="2" height="1" fill="#000"/><rect x="55" y="15" width="1" height="1" fill="#fff"/><rect x="56" y="15" width="2" height="1" fill="#000"/><rect x="58" y="15" width="9" height="1" fill="#fff"/><rect x="67" y="15" width="2" height="1" fill="#000"/><rect x="69" y="15" width="1" height="1" fill="#fff"/><rect x="70" y="15" width="2" height="1" fill="#000"/><rect x="72" y="15" width="9" height="1" fill="#fff"/><rect x="81" y="15" width="2" height="1" fill="#000"/><rect x="83" y="15" width="1" height="1" fill="#fff"/><rect x="84" y="15" width="2" height="1" fill="#000"/><rect x="86" y="15" width="9" height="1" fill="#fff"/><rect x="95" y="15" width="2" height="1" fill="#000"/><rect x="97" y="15" width="1" height="1" fill="#fff"/><rect x="98" y="15" width="2" height="1" fill="#000"/><rect x="100" y="15" width="9" height="1" fill="#fff"/><rect x="109" y="15" width="2" height="1" fill="#000"/><rect x="0" y="16" width="1" height="1" fill="#000"/><rect x="1" y="16" width="1" height="1" fill="#fff"/><rect x="2" y="16" width="1" height="1" fill="#000"/><rect x="3" y="16" width="7" height="1" fill="#fff"/><rect x="10" y="16" width="1" height="1" fill="#000"/><rect x="11" y="16" width="1" height="1" fill="#fff"/><rect x="12" y="16" width="1" height="1" fill="#000"/><rect x="13" y="16" width="1" height="1" fill="#fff"/><rect x="14" y="16" width="1" height="1" fill="#000"/><rect x="15" y="16" width="1" height="1" fill="#fff"/><rect x="16" y="16" width="1" height="1" fill="#000"/><rect x="17" y="16" width="7" height="1" fill="#fff"/><rect x="24" y="16" width="1" height="1" fill="#000"/><rect x="25" y="16" width="1" height="1" fill="#fff"/><rect x="26" y="16" width="1" height="1" fill="#000"/><rect x="27" y="16" width="1" height="1" fill="#fff"/><rect x="28" y="16" width="1" height="1" fill="#000"/><rect x="29" y="16" width="1" height="1" fill="#fff"/><rect x="30" y="16" width="1" height="1" fill="#000"/><rect x="31" y="16" width="7" height="1" fill="#fff"/><rect x="38" y="16" width="1" height="1" fill="#000"/><rect x="39" y="16" width="1" height="1" fill="#fff"/><rect x="40" y="16" width="1" height="1" fill="#000"/><rect x="41" y="16" width="1" height="1" fill="#fff"/><rect x="42" y="16" width="1" height="1" fill="#000"/><rect x="43" y="16" width="1" height="1" fill="#fff"/><rect x="44" y="16" width="1" height="1" fill="#000"/><rect x="45" y="16" width="7" height="1" fill="#fff"/><rect x="52" y="16" width="1" height="1" fill="#000"/><rect x="53" y="16" width="1" height="1" fill="#fff"/><rect x="54" y="16" width="1" height="1" fill="#000"/><rect x="55" y="16" width="1" height="1" fill="#fff"/><rect x="56" y="16" width="1" height="1" fill="#000"/><rect x="57" y="16" width="1" height="1" fill="#fff"/><rect x="58" y="16" width="1" height="1" fill="#000"/><rect x="59" y="16" width="7" height="1" fill="#fff"/><rect x="66" y="16" width="1" height="1" fill="#000"/><rect x="67" y="16" width="1" height="1" fill="#fff"/><rect x="68" y="16" width="1" height="1" fill="#000"/><rect x="69" y="16" width="1" height="1" fill="#fff"/><rect x="70" y="16" width="1" height="1" fill="#000"/><rect x="71" y="16" width="1" height="1" fill="#fff"/><rect x="72" y="16" width="1" height="1" fill="#000"/><rect x="73" y="16" width="7" height="1" fill="#fff"/><rect x="80" y="16" width="1" height="1" fill="#000"/><rect x="81" y="16" width="1" height="1" fill="#fff"/><rect x="82" y="16" width="1" height="1" fill="#000"/><rect x="83" y="16" width="1" height="1" fill="#fff"/><rect x="84" y="16" width="1" height="1" fill="#000"/><rect x="85" y="16" width="1" height="1" fill="#fff"/><rect x="86" y="16" width="1" height="1" fill="#000"/><rect x="87" y="16" width="7" height="1" fill="#fff"/><rect x="94" y="16" width="1" height="1" fill="#000"/><rect x="95" y="16" width="1" height="1" fill="#fff"/><rect x="96" y="16" width="1" height="1" fill="#000"/><rect x="97" y="16" width="1" height="1" fill="#fff"/><rect x="98" y="16" width="1" height="1" fill="#000"/><rect x="99" y="16" width="1" height="1" fill="#fff"/><rect x="100" y="16" width="1" height="1" fill="#000"/><rect x="101" y="16" width="7" height="1" fill="#fff"/><rect x="108" y="16" width="1" height="1" fill="#000"/><rect x="109" y="16" width="1" height="1" fill="#fff"/><rect x="110" y="16" width="1" height="1" fill="#000"/><rect x="0" y="17" width="1" height="1" fill="#000"/><rect x="1" y="17" width="2" height="1" fill="#fff"/><rect x="3" y="17" width="7" height="1" fill="#000"/><rect x="10" y="17" width="2" height="1" fill="#fff"/><rect x="12" y="17" width="1" height="1" fill="#000"/><rect x="13" y="17" width="1" height="1" fill="#fff"/><rect x="14" y="17" width="1" height="1" fill="#000"/><rect x="15" y="17" width="2" height="1" fill="#fff"/><rect x="17" y="17" width="7" height="1" fill="#000"/><rect x="24" y="17" width="2" height="1" fill="#fff"/><rect x="26" y="17" width="1" height="1" fill="#000"/><rect x="27" y="17" width="1" height="1" fill="#fff"/><rect x="28" y="17" width="1" height="1" fill="#000"/><rect x="29" y="17" width="2" height="1" fill="#fff"/><rect x="31" y="17" width="7" height="1" fill="#000"/><rect x="38" y="17" width="2" height="1" fill="#fff"/><rect x="40" y="17" width="1" height="1" fill="#000"/><rect x="41" y="17" width="1" height="1" fill="#fff"/><rect x="42" y="17" width="1" height="1" fill="#000"/><rect x="43" y="17" width="2" height="1" fill="#fff"/><rect x="45" y="17" width="7" height="1" fill="#000"/><rect x="52" y="17" width="2" height="1" fill="#fff"/><rect x="54" y="17" width="1" height="1" fill="#000"/><rect x="55" y="17" width="1" height="1" fill="#fff"/><rect x="56" y="17" width="1" height="1" fill="#000"/><rect x="57" y="17" width="2" height="1" fill="#fff"/><rect x="59" y="17" width="7" height="1" fill="#000"/><rect x="66" y="17" width="2" height="1" fill="#fff"/><rect x="68" y="17" width="1" height="1" fill="#000"/><rect x="69" y="17" width="1" height="1" fill="#fff"/><rect x="70" y="17" width="1" height="1" fill="#000"/><rect x="71" y="17" width="2" height="1" fill="#fff"/><rect x="73" y="17" width="7" height="1" fill="#000"/><rect x="80" y="17" width="2" height="1" fill="#fff"/><rect x="82" y="17" width="1" height="1" fill="#000"/><rect x="83" y="17" width="1" height="1" fill="#fff"/><rect x="84" y="17" width="1" height="1" fill="#000"/><rect x="85" y="17" width="2" height="1" fill="#fff"/><rect x="87" y="17" width="7" height="1" fill="#000"/><rect x="94" y="17" width="2" height="1" fill="#fff"/><rect x="96" y="17" width="1" height="1" fill="#000"/><rect x="97" y="17" width="1" height="1" fill="#fff"/><rect x="98" y="17" width="1" height="1" fill="#000"/><rect x="99" y="17" width="2" height="1" fill="#fff"/><rect x="101" y="17" width="7" height="1" fill="#000"/><rect x="108" y="17" width="2" height="1" fill="#fff"/><rect x="110" y="17" width="1" height="1" fill="#000"/><rect x="0" y="18" width="1" height="1" fill="#000"/><rect x="1" y="18" width="2" height="1" fill="#fff"/><rect x="3" y="18" width="1" height="1" fill="#000"/><rect x="4" y="18" width="5" height="1" fill="#fff"/><rect x="9" y="18" width="1" height="1" fill="#000"/><rect x="10" y="18" width="2" height="1" fill="#fff"/><rect x="12" y="18" width="1" height="1" fill="#000"/><rect x="13" y="18" width="1" height="1" fill="#fff"/><rect x="14" y="18" width="1" height="1" fill="#000"/><rect x="15" y="18" width="2" height="1" fill="#fff"/><rect x="17" y="18" width="1" height="1" fill="#000"/><rect x="18" y="18" width="5" height="1" fill="#fff"/><rect x="23" y="18" width="1" height="1" fill="#000"/><rect x="24" y="18" width="2" height="1" fill="#fff"/><rect x="26" y="18" width="1" height="1" fill="#000"/><rect x="27" y="18" width="1" height="1" fill="#fff"/><rect x="28" y="18" width="1" height="1" fill="#000"/><rect x="29" y="18" width="2" height="1" fill="#fff"/><rect x="31" y="18" width="1" height="1" fill="#000"/><rect x="32" y="18" width="5" height="1" fill="#fff"/><rect x="37" y="18" width="1" height="1" fill="#000"/><rect x="38" y="18" width="2" height="1" fill="#fff"/><rect x="40" y="18" width="1" height="1" fill="#000"/><rect x="41" y="18" width="1" height="1" fill="#fff"/><rect x="42" y="18" width="1" height="1" fill="#000"/><rect x="43" y="18" width="2" height="1" fill="#fff"/><rect x="45" y="18" width="1" height="1" fill="#000"/><rect x="46" y="18" width="5" height="1" fill="#fff"/><rect x="51" y="18" width="1" height="1" fill="#000"/><rect x="52" y="18" width="2" height="1" fill="#fff"/><rect x="54" y="18" width="1" height="1" fill="#000"/><rect x="55" y="18" width="1" height="1" fill="#fff"/><rect x="56" y="18" width="1" height="1" fill="#000"/><rect x="57" y="18" width="2" height="1" fill="#fff"/><rect x="59" y="18" width="1" height="1" fill="#000"/><rect x="60" y="18" width="5" height="1" fill="#fff"/><rect x="65" y="18" width="1" height="1" fill="#000"/><rect x="66" y="18" width="2" height="1" fill="#fff"/><rect x="68" y="18" width="1" height="1" fill="#000"/><rect x="69" y="18" width="1" height="1" fill="#fff"/><rect x="70" y="18" width="1" height="1" fill="#000"/><rect x="71" y="18" width="2" height="1" fill="#fff"/><rect x="73" y="18" width="1" height="1" fill="#000"/><rect x="74" y="18" width="5" height="1" fill="#fff"/><rect x="79" y="18" width="1" height="1" fill="#000"/><rect x="80" y="18" width="2" height="1" fill="#fff"/><rect x="82" y="18" width="1" height="1" fill="#000"/><rect x="83" y="18" width="1" height="1" fill="#fff"/><rect x="84" y="18" width="1" height="1" fill="#000"/><rect x="85" y="18" width="2" height="1" fill="#fff"/><rect x="87" y="18" width="1" height="1" fill="#000"/><rect x="88" y="18" width="5" height="1" fill="#fff"/><rect x="93" y="18" width="1" height="1" fill="#000"/><rect x="94" y="18" width="2" height="1" fill="#fff"/><rect x="96" y="18" width="1" height="1" fill="#000"/><rect x="97" y="18" width="1" height="1" fill="#fff"/><rect x="98" y="18" width="1" height="1" fill="#000"/><rect x="99" y="18" width="2" height="1" fill="#fff"/><rect x="101" y="18" width="1" height="1" fill="#000"/><rect x="102" y="18" width="5" height="1" fill="#fff"/><rect x="107" y="18" width="1" height="1" fill="#000"/><rect x="108" y="18" width="2" height="1" fill="#fff"/><rect x="110" y="18" width="1" height="1" fill="#000"/><rect x="0" y="19" width="1" height="1" fill="#000"/><rect x="1" y="19" width="2" height="1" fill="#fff"/><rect x="3" y="19" width="1" height="1" fill="#000"/><rect x="4" y="19" width="1" height="1" fill="#fff"/><rect x="5" y="19" width="3" height="1" fill="#f0f0f0"/><rect x="8" y="19" width="1" height="1" fill="#fff"/><rect x="9" y="19" width="1" height="1" fill="#000"/><rect x="10" y="19" width="2" height="1" fill="#fff"/><rect x="12" y="19" width="1" height="1" fill="#000"/><rect x="13" y="19" width="1" height="1" fill="#fff"/><rect x="14" y="19" width="1" height="1" fill="#000"/><rect x="15" y="19" width="2" height="1" fill="#fff"/><rect x="17" y="19" width="1" height="1" fill="#000"/><rect x="18" y="19" width="1" height="1" fill="#fff"/><rect x="19" y="19" width="3" height="1" fill="#f0f0f0"/><rect x="22" y="19" width="1" height="1" fill="#fff"/><rect x="23" y="19" width="1" height="1" fill="#000"/><rect x="24" y="19" width="2" height="1" fill="#fff"/><rect x="26" y="19" width="1" height="1" fill="#000"/><rect x="27" y="19" width="1" height="1" fill="#fff"/><rect x="28" y="19" width="1" height="1" fill="#000"/><rect x="29" y="19" width="2" height="1" fill="#fff"/><rect x="31" y="19" width="1" height="1" fill="#000"/><rect x="32" y="19" width="1" height="1" fill="#fff"/><rect x="33" y="19" width="3" height="1" fill="#f0f0f0"/><rect x="36" y="19" width="1" height="1" fill="#fff"/><rect x="37" y="19" width="1" height="1" fill="#000"/><rect x="38" y="19" width="2" height="1" fill="#fff"/><rect x="40" y="19" width="1" height="1" fill="#000"/><rect x="41" y="19" width="1" height="1" fill="#fff"/><rect x="42" y="19" width="1" height="1" fill="#000"/><rect x="43" y="19" width="2" height="1" fill="#fff"/><rect x="45" y="19" width="1" height="1" fill="#000"/><rect x="46" y="19" width="1" height="1" fill="#fff"/><rect x="47" y="19" width="3" height="1" fill="#f0f0f0"/><rect x="50" y="19" width="1" height="1" fill="#fff"/><rect x="51" y="19" width="1" height="1" fill="#000"/><rect x="52" y="19" width="2" height="1" fill="#fff"/><rect x="54" y="19" width="1" height="1" fill="#000"/><rect x="55" y="19" width="1" height="1" fill="#fff"/><rect x="56" y="19" width="1" height="1" fill="#000"/><rect x="57" y="19" width="2" height="1" fill="#fff"/><rect x="59" y="19" width="1" height="1" fill="#000"/><rect x="60" y="19" width="1" height="1" fill="#fff"/><rect x="61" y="19" width="3" height="1" fill="#f0f0f0"/><rect x="64" y="19" width="1" height="1" fill="#fff"/><rect x="65" y="19" width="1" height="1" fill="#000"/><rect x="66" y="19" width="2" height="1" fill="#fff"/><rect x="68" y="19" width="1" height="1" fill="#000"/><rect x="69" y="19" width="1" height="1" fill="#fff"/><rect x="70" y="19" width="1" height="1" fill="#000"/><rect x="71" y="19" width="2" height="1" fill="#fff"/><rect x="73" y="19" width="1" height="1" fill="#000"/><rect x="74" y="19" width="1" height="1" fill="#fff"/><rect x="75" y="19" width="3" height="1" fill="#f0f0f0"/><rect x="78" y="19" width="1" height="1" fill="#fff"/><rect x="79" y="19" width="1" height="1" fill="#000"/><rect x="80" y="19" width="2" height="1" fill="#fff"/><rect x="82" y="19" width="1" height="1" fill="#000"/><rect x="83" y="19" width="1" height="1" fill="#fff"/><rect x="84" y="19" width="1" height="1" fill="#000"/><rect x="85" y="19" width="2" height="1" fill="#fff"/><rect x="87" y="19" width="1" height="1" fill="#000"/><rect x="88" y="19" width="1" height="1" fill="#fff"/><rect x="89" y="19" width="3" height="1" fill="#f0f0f0"/><rect x="92" y="19" width="1" height="1" fill="#fff"/><rect x="93" y="19" width="1" height="1" fill="#000"/><rect x="94" y="19" width="2" height="1" fill="#fff"/><rect x="96" y="19" width="1" height="1" fill="#000"/><rect x="97" y="19" width="1" height="1" fill="#fff"/><rect x="98" y="19" width="1" height="1" fill="#000"/><rect x="99" y="19" width="2" height="1" fill="#fff"/><rect x="101" y="19" width="1" height="1" fill="#000"/><rect x="102" y="19" width="1" height="1" fill="#fff"/><rect x="103" y="19" width="3" height="1" fill="#f0f0f0"/><rect x="106" y="19" width="1" height="1" fill="#fff"/><rect x="107" y="19" width="1" height="1" fill="#000"/><rect x="108" y="19" width="2" height="1" fill="#fff"/><rect x="110" y="19" width="1" height="1" fill="#000"/><rect x="0" y="20" width="1" height="1" fill="#000"/><rect x="1" y="20" width="2" height="1" fill="#fff"/><rect x="3" y="20" width="1" height="1" fill="#000"/><rect x="4" y="20" width="1" height="1" fill="#fff"/><rect x="5" y="20" width="3" height="1" fill="#f0f0f0"/><rect x="8" y="20" width="1" height="1" fill="#fff"/><rect x="9" y="20" width="1" height="1" fill="#000"/><rect x="10" y="20" width="2" height="1" fill="#fff"/><rect x="12" y="20" width="1" height="1" fill="#000"/><rect x="13" y="20" width="1" height="1" fill="#fff"/><rect x="14" y="20" width="1" height="1" fill="#000"/><rect x="15" y="20" width="2" height="1" fill="#fff"/><rect x="17" y="20" width="1" height="1" fill="#000"/><rect x="18" y="20" width="1" height="1" fill="#fff"/><rect x="19" y="20" width="3" height="1" fill="#f0f0f0"/><rect x="22" y="20" width="1" height="1" fill="#fff"/><rect x="23" y="20" width="1" height="1" fill="#000"/><rect x="24" y="20" width="2" height="1" fill="#fff"/><rect x="26" y="20" width="1" height="1" fill="#000"/><rect x="27" y="20" width="1" height="1" fill="#fff"/><rect x="28" y="20" width="1" height="1" fill="#000"/><rect x="29" y="20" width="2" height="1" fill="#fff"/><rect x="31" y="20" width="1" height="1" fill="#000"/><rect x="32" y="20" width="1" height="1" fill="#fff"/><rect x="33" y="20" width="3" height="1" fill="#f0f0f0"/><rect x="36" y="20" width="1" height="1" fill="#fff"/><rect x="37" y="20" width="1" height="1" fill="#000"/><rect x="38" y="20" width="2" height="1" fill="#fff"/><rect x="40" y="20" width="1" height="1" fill="#000"/><rect x="41" y="20" width="1" height="1" fill="#fff"/><rect x="42" y="20" width="1" height="1" fill="#000"/><rect x="43" y="20" width="2" height="1" fill="#fff"/><rect x="45" y="20" width="1" height="1" fill="#000"/><rect x="46" y="20" width="1" height="1" fill="#fff"/><rect x="47" y="20" width="3" height="1" fill="#f0f0f0"/><rect x="50" y="20" width="1" height="1" fill="#fff"/><rect x="51" y="20" width="1" height="1" fill="#000"/><rect x="52" y="20" width="2" height="1" fill="#fff"/><rect x="54" y="20" width="1" height="1" fill="#000"/><rect x="55" y="20" width="1" height="1" fill="#fff"/><rect x="56" y="20" width="1" height="1" fill="#000"/><rect x="57" y="20" width="2" height="1" fill="#fff"/><rect x="59" y="20" width="1" height="1" fill="#000"/><rect x="60" y="20" width="1" height="1" fill="#fff"/><rect x="61" y="20" width="3" height="1" fill="#f0f0f0"/><rect x="64" y="20" width="1" height="1" fill="#fff"/><rect x="65" y="20" width="1" height="1" fill="#000"/><rect x="66" y="20" width="2" height="1" fill="#fff"/><rect x="68" y="20" width="1" height="1" fill="#000"/><rect x="69" y="20" width="1" height="1" fill="#fff"/><rect x="70" y="20" width="1" height="1" fill="#000"/><rect x="71" y="20" width="2" height="1" fill="#fff"/><rect x="73" y="20" width="1" height="1" fill="#000"/><rect x="74" y="20" width="1" height="1" fill="#fff"/><rect x="75" y="20" width="3" height="1" fill="#f0f0f0"/><rect x="78" y="20" width="1" height="1" fill="#fff"/><rect x="79" y="20" width="1" height="1" fill="#000"/><rect x="80" y="20" width="2" height="1" fill="#fff"/><rect x="82" y="20" width="1" height="1" fill="#000"/><rect x="83" y="20" width="1" height="1" fill="#fff"/><rect x="84" y="20" width="1" height="1" fill="#000"/><rect x="85" y="20" width="2" height="1" fill="#fff"/><rect x="87" y="20" width="1" height="1" fill="#000"/><rect x="88" y="20" width="1" height="1" fill="#fff"/><rect x="89" y="20" width="3" height="1" fill="#f0f0f0"/><rect x="92" y="20" width="1" height="1" fill="#fff"/><rect x="93" y="20" width="1" height="1" fill="#000"/><rect x="94" y="20" width="2" height="1" fill="#fff"/><rect x="96" y="20" width="1" height="1" fill="#000"/><rect x="97" y="20" width="1" height="1" fill="#fff"/><rect x="98" y="20" width="1" height="1" fill="#000"/><rect x="99" y="20" width="2" height="1" fill="#fff"/><rect x="101" y="20" width="1" height="1" fill="#000"/><rect x="102" y="20" width="1" height="1" fill="#fff"/><rect x="103" y="20" width="3" height="1" fill="#f0f0f0"/><rect x="106" y="20" width="1" height="1" fill="#fff"/><rect x="107" y="20" width="1" height="1" fill="#000"/><rect x="108" y="20" width="2" height="1" fill="#fff"/><rect x="110" y="20" width="1" height="1" fill="#000"/><rect x="0" y="21" width="1" height="1" fill="#000"/><rect x="1" y="21" width="2" height="1" fill="#fff"/><rect x="3" y="21" width="1" height="1" fill="#000"/><rect x="4" y="21" width="1" height="1" fill="#fff"/><rect x="5" y="21" width="3" height="1" fill="#f0f0f0"/><rect x="8" y="21" width="1" height="1" fill="#fff"/><rect x="9" y="21" width="1" height="1" fill="#000"/><rect x="10" y="21" width="2" height="1" fill="#fff"/><rect x="12" y="21" width="1" height="1" fill="#000"/><rect x="13" y="21" width="1" height="1" fill="#fff"/><rect x="14" y="21" width="1" height="1" fill="#000"/><rect x="15" y="21" width="2" height="1" fill="#fff"/><rect x="17" y="21" width="1" height="1" fill="#000"/><rect x="18" y="21" width="1" height="1" fill="#fff"/><rect x="19" y="21" width="3" height="1" fill="#f0f0f0"/><rect x="22" y="21" width="1" height="1" fill="#fff"/><rect x="23" y="21" width="1" height="1" fill="#000"/><rect x="24" y="21" width="2" height="1" fill="#fff"/><rect x="26" y="21" width="1" height="1" fill="#000"/><rect x="27" y="21" width="1" height="1" fill="#fff"/><rect x="28" y="21" width="1" height="1" fill="#000"/><rect x="29" y="21" width="2" height="1" fill="#fff"/><rect x="31" y="21" width="1" height="1" fill="#000"/><rect x="32" y="21" width="1" height="1" fill="#fff"/><rect x="33" y="21" width="3" height="1" fill="#f0f0f0"/><rect x="36" y="21" width="1" height="1" fill="#fff"/><rect x="37" y="21" width="1" height="1" fill="#000"/><rect x="38" y="21" width="2" height="1" fill="#fff"/><rect x="40" y="21" width="1" height="1" fill="#000"/><rect x="41" y="21" width="1" height="1" fill="#fff"/><rect x="42" y="21" width="1" height="1" fill="#000"/><rect x="43" y="21" width="2" height="1" fill="#fff"/><rect x="45" y="21" width="1" height="1" fill="#000"/><rect x="46" y="21" width="1" height="1" fill="#fff"/><rect x="47" y="21" width="3" height="1" fill="#f0f0f0"/><rect x="50" y="21" width="1" height="1" fill="#fff"/><rect x="51" y="21" width="1" height="1" fill="#000"/><rect x="52" y="21" width="2" height="1" fill="#fff"/><rect x="54" y="21" width="1" height="1" fill="#000"/><rect x="55" y="21" width="1" height="1" fill="#fff"/><rect x="56" y="21" width="1" height="1" fill="#000"/><rect x="57" y="21" width="2" height="1" fill="#fff"/><rect x="59" y="21" width="1" height="1" fill="#000"/><rect x="60" y="21" width="1" height="1" fill="#fff"/><rect x="61" y="21" width="3" height="1" fill="#f0f0f0"/><rect x="64" y="21" width="1" height="1" fill="#fff"/><rect x="65" y="21" width="1" height="1" fill="#000"/><rect x="66" y="21" width="2" height="1" fill="#fff"/><rect x="68" y="21" width="1" height="1" fill="#000"/><rect x="69" y="21" width="1" height="1" fill="#fff"/><rect x="70" y="21" width="1" height="1" fill="#000"/><rect x="71" y="21" width="2" height="1" fill="#fff"/><rect x="73" y="21" width="1" height="1" fill="#000"/><rect x="74" y="21" width="1" height="1" fill="#fff"/><rect x="75" y="21" width="3" height="1" fill="#f0f0f0"/><rect x="78" y="21" width="1" height="1" fill="#fff"/><rect x="79" y="21" width="1" height="1" fill="#000"/><rect x="80" y="21" width="2" height="1" fill="#fff"/><rect x="82" y="21" width="1" height="1" fill="#000"/><rect x="83" y="21" width="1" height="1" fill="#fff"/><rect x="84" y="21" width="1" height="1" fill="#000"/><rect x="85" y="21" width="2" height="1" fill="#fff"/><rect x="87" y="21" width="1" height="1" fill="#000"/><rect x="88" y="21" width="1" height="1" fill="#fff"/><rect x="89" y="21" width="3" height="1" fill="#f0f0f0"/><rect x="92" y="21" width="1" height="1" fill="#fff"/><rect x="93" y="21" width="1" height="1" fill="#000"/><rect x="94" y="21" width="2" height="1" fill="#fff"/><rect x="96" y="21" width="1" height="1" fill="#000"/><rect x="97" y="21" width="1" height="1" fill="#fff"/><rect x="98" y="21" width="1" height="1" fill="#000"/><rect x="99" y="21" width="2" height="1" fill="#fff"/><rect x="101" y="21" width="1" height="1" fill="#000"/><rect x="102" y="21" width="1" height="1" fill="#fff"/><rect x="103" y="21" width="3" height="1" fill="#f0f0f0"/><rect x="106" y="21" width="1" height="1" fill="#fff"/><rect x="107" y="21" width="1" height="1" fill="#000"/><rect x="108" y="21" width="2" height="1" fill="#fff"/><rect x="110" y="21" width="1" height="1" fill="#000"/><rect x="0" y="22" width="1" height="1" fill="#000"/><rect x="1" y="22" width="2" height="1" fill="#fff"/><rect x="3" y="22" width="1" height="1" fill="#000"/><rect x="4" y="22" width="5" height="1" fill="#fff"/><rect x="9" y="22" width="1" height="1" fill="#000"/><rect x="10" y="22" width="2" height="1" fill="#fff"/><rect x="12" y="22" width="1" height="1" fill="#000"/><rect x="13" y="22" width="1" height="1" fill="#fff"/><rect x="14" y="22" width="1" height="1" fill="#000"/><rect x="15" y="22" width="2" height="1" fill="#fff"/><rect x="17" y="22" width="1" height="1" fill="#000"/><rect x="18" y="22" width="5" height="1" fill="#fff"/><rect x="23" y="22" width="1" height="1" fill="#000"/><rect x="24" y="22" width="2" height="1" fill="#fff"/><rect x="26" y="22" width="1" height="1" fill="#000"/><rect x="27" y="22" width="1" height="1" fill="#fff"/><rect x="28" y="22" width="1" height="1" fill="#000"/><rect x="29" y="22" width="2" height="1" fill="#fff"/><rect x="31" y="22" width="1" height="1" fill="#000"/><rect x="32" y="22" width="5" height="1" fill="#fff"/><rect x="37" y="22" width="1" height="1" fill="#000"/><rect x="38" y="22" width="2" height="1" fill="#fff"/><rect x="40" y="22" width="1" height="1" fill="#000"/><rect x="41" y="22" width="1" height="1" fill="#fff"/><rect x="42" y="22" width="1" height="1" fill="#000"/><rect x="43" y="22" width="2" height="1" fill="#fff"/><rect x="45" y="22" width="1" height="1" fill="#000"/><rect x="46" y="22" width="5" height="1" fill="#fff"/><rect x="51" y="22" width="1" height="1" fill="#000"/><rect x="52" y="22" width="2" height="1" fill="#fff"/><rect x="54" y="22" width="1" height="1" fill="#000"/><rect x="55" y="22" width="1" height="1" fill="#fff"/><rect x="56" y="22" width="1" height="1" fill="#000"/><rect x="57" y="22" width="2" height="1" fill="#fff"/><rect x="59" y="22" width="1" height="1" fill="#000"/><rect x="60" y="22" width="5" height="1" fill="#fff"/><rect x="65" y="22" width="1" height="1" fill="#000"/><rect x="66" y="22" width="2" height="1" fill="#fff"/><rect x="68" y="22" width="1" height="1" fill="#000"/><rect x="69" y="22" width="1" height="1" fill="#fff"/><rect x="70" y="22" width="1" height="1" fill="#000"/><rect x="71" y="22" width="2" height="1" fill="#fff"/><rect x="73" y="22" width="1" height="1" fill="#000"/><rect x="74" y="22" width="5" height="1" fill="#fff"/><rect x="79" y="22" width="1" height="1" fill="#000"/><rect x="80" y="22" width="2" height="1" fill="#fff"/><rect x="82" y="22" width="1" height="1" fill="#000"/><rect x="83" y="22" width="1" height="1" fill="#fff"/><rect x="84" y="22" width="1" height="1" fill="#000"/><rect x="85" y="22" width="2" height="1" fill="#fff"/><rect x="87" y="22" width="1" height="1" fill="#000"/><rect x="88" y="22" width="5" height="1" fill="#fff"/><rect x="93" y="22" width="1" height="1" fill="#000"/><rect x="94" y="22" width="2" height="1" fill="#fff"/><rect x="96" y="22" width="1" height="1" fill="#000"/><rect x="97" y="22" width="1" height="1" fill="#fff"/><rect x="98" y="22" width="1" height="1" fill="#000"/><rect x="99" y="22" width="2" height="1" fill="#fff"/><rect x="101" y="22" width="1" height="1" fill="#000"/><rect x="102" y="22" width="5" height="1" fill="#fff"/><rect x="107" y="22" width="1" height="1" fill="#000"/><rect x="108" y="22" width="2" height="1" fill="#fff"/><rect x="110" y="22" width="1" height="1" fill="#000"/><rect x="0" y="23" width="1" height="1" fill="#000"/><rect x="1" y="23" width="2" height="1" fill="#fff"/><rect x="3" y="23" width="7" height="1" fill="#000"/><rect x="10" y="23" width="2" height="1" fill="#fff"/><rect x="12" y="23" width="1" height="1" fill="#000"/><rect x="13" y="23" width="1" height="1" fill="#fff"/><rect x="14" y="23" width="1" height="1" fill="#000"/><rect x="15" y="23" width="2" height="1" fill="#fff"/><rect x="17" y="23" width="7" height="1" fill="#000"/><rect x="24" y="23" width="2" height="1" fill="#fff"/><rect x="26" y="23" width="1" height="1" fill="#000"/><rect x="27" y="23" width="1" height="1" fill="#fff"/><rect x="28" y="23" width="1" height="1" fill="#000"/><rect x="29" y="23" width="2" height="1" fill="#fff"/><rect x="31" y="23" width="7" height="1" fill="#000"/><rect x="38" y="23" width="2" height="1" fill="#fff"/><rect x="40" y="23" width="1" height="1" fill="#000"/><rect x="41" y="23" width="1" height="1" fill="#fff"/><rect x="42" y="23" width="1" height="1" fill="#000"/><rect x="43" y="23" width="2" height="1" fill="#fff"/><rect x="45" y="23" width="7" height="1" fill="#000"/><rect x="52" y="23" width="2" height="1" fill="#fff"/><rect x="54" y="23" width="1" height="1" fill="#000"/><rect x="55" y="23" width="1" height="1" fill="#fff"/><rect x="56" y="23" width="1" height="1" fill="#000"/><rect x="57" y="23" width="2" height="1" fill="#fff"/><rect x="59" y="23" width="7" height="1" fill="#000"/><rect x="66" y="23" width="2" height="1" fill="#fff"/><rect x="68" y="23" width="1" height="1" fill="#000"/><rect x="69" y="23" width="1" height="1" fill="#fff"/><rect x="70" y="23" width="1" height="1" fill="#000"/><rect x="71" y="23" width="2" height="1" fill="#fff"/><rect x="73" y="23" width="7" height="1" fill="#000"/><rect x="80" y="23" width="2" height="1" fill="#fff"/><rect x="82" y="23" width="1" height="1" fill="#000"/><rect x="83" y="23" width="1" height="1" fill="#fff"/><rect x="84" y="23" width="1" height="1" fill="#000"/><rect x="85" y="23" width="2" height="1" fill="#fff"/><rect x="87" y="23" width="7" height="1" fill="#000"/><rect x="94" y="23" width="2" height="1" fill="#fff"/><rect x="96" y="23" width="1" height="1" fill="#000"/><rect x="97" y="23" width="1" height="1" fill="#fff"/><rect x="98" y="23" width="1" height="1" fill="#000"/><rect x="99" y="23" width="2" height="1" fill="#fff"/><rect x="101" y="23" width="7" height="1" fill="#000"/><rect x="108" y="23" width="2" height="1" fill="#fff"/><rect x="110" y="23" width="1" height="1" fill="#000"/><rect x="0" y="24" width="1" height="1" fill="#000"/><rect x="1" y="24" width="1" height="1" fill="#fff"/><rect x="2" y="24" width="1" height="1" fill="#000"/><rect x="3" y="24" width="7" height="1" fill="#fff"/><rect x="10" y="24" width="1" height="1" fill="#000"/><rect x="11" y="24" width="1" height="1" fill="#fff"/><rect x="12" y="24" width="1" height="1" fill="#000"/><rect x="13" y="24" width="1" height="1" fill="#fff"/><rect x="14" y="24" width="1" height="1" fill="#000"/><rect x="15" y="24" width="1" height="1" fill="#fff"/><rect x="16" y="24" width="1" height="1" fill="#000"/><rect x="17" y="24" width="7" height="1" fill="#fff"/><rect x="24" y="24" width="1" height="1" fill="#000"/><rect x="25" y="24" width="1" height="1" fill="#fff"/><rect x="26" y="24" width="1" height="1" fill="#000"/><rect x="27" y="24" width="1" height="1" fill="#fff"/><rect x="28" y="24" width="1" height="1" fill="#000"/><rect x="29" y="24" width="1" height="1" fill="#fff"/><rect x="30" y="24" width="1" height="1" fill="#000"/><rect x="31" y="24" width="7" height="1" fill="#fff"/><rect x="38" y="24" width="1" height="1" fill="#000"/><rect x="39" y="24" width="1" height="1" fill="#fff"/><rect x="40" y="24" width="1" height="1" fill="#000"/><rect x="41" y="24" width="1" height="1" fill="#fff"/><rect x="42" y="24" width="1" height="1" fill="#000"/><rect x="43" y="24" width="1" height="1" fill="#fff"/><rect x="44" y="24" width="1" height="1" fill="#000"/><rect x="45" y="24" width="7" height="1" fill="#fff"/><rect x="52" y="24" width="1" height="1" fill="#000"/><rect x="53" y="24" width="1" height="1" fill="#fff"/><rect x="54" y="24" width="1" height="1" fill="#000"/><rect x="55" y="24" width="1" height="1" fill="#fff"/><rect x="56" y="24" width="1" height="1" fill="#000"/><rect x="57" y="24" width="1" height="1" fill="#fff"/><rect x="58" y="24" width="1" height="1" fill="#000"/><rect x="59" y="24" width="7" height="1" fill="#fff"/><rect x="66" y="24" width="1" height="1" fill="#000"/><rect x="67" y="24" width="1" height="1" fill="#fff"/><rect x="68" y="24" width="1" height="1" fill="#000"/><rect x="69" y="24" width="1" height="1" fill="#fff"/><rect x="70" y="24" width="1" height="1" fill="#000"/><rect x="71" y="24" width="1" height="1" fill="#fff"/><rect x="72" y="24" width="1" height="1" fill="#000"/><rect x="73" y="24" width="7" height="1" fill="#fff"/><rect x="80" y="24" width="1" height="1" fill="#000"/><rect x="81" y="24" width="1" height="1" fill="#fff"/><rect x="82" y="24" width="1" height="1" fill="#000"/><rect x="83" y="24" width="1" height="1" fill="#fff"/><rect x="84" y="24" width="1" height="1" fill="#000"/><rect x="85" y="24" width="1" height="1" fill="#fff"/><rect x="86" y="24" width="1" height="1" fill="#000"/><rect x="87" y="24" width="7" height="1" fill="#fff"/><rect x="94" y="24" width="1" height="1" fill="#000"/><rect x="95" y="24" width="1" height="1" fill="#fff"/><rect x="96" y="24" width="1" height="1" fill="#000"/><rect x="97" y="24" width="1" height="1" fill="#fff"/><rect x="98" y="24" width="1" height="1" fill="#000"/><rect x="99" y="24" width="1" height="1" fill="#fff"/><rect x="100" y="24" width="1" height="1" fill="#000"/><rect x="101" y="24" width="7" height="1" fill="#fff"/><rect x="108" y="24" width="1" height="1" fill="#000"/><rect x="109" y="24" width="1" height="1" fill="#fff"/><rect x="110" y="24" width="1" height="1" fill="#000"/><rect x="0" y="25" width="2" height="1" fill="#000"/><rect x="2" y="25" width="9" height="1" fill="#fff"/><rect x="11" y="25" width="2" height="1" fill="#000"/><rect x="13" y="25" width="1" height="1" fill="#fff"/><rect x="14" y="25" width="2" height="1" fill="#000"/><rect x="16" y="25" width="9" height="1" fill="#fff"/><rect x="25" y="25" width="2" height="1" fill="#000"/><rect x="27" y="25" width="1" height="1" fill="#fff"/><rect x="28" y="25" width="2" height="1" fill="#000"/><rect x="30" y="25" width="9" height="1" fill="#fff"/><rect x="39" y="25" width="2" height="1" fill="#000"/><rect x="41" y="25" width="1" height="1" fill="#fff"/><rect x="42" y="25" width="2" height="1" fill="#000"/><rect x="44" y="25" width="9" height="1" fill="#fff"/><rect x="53" y="25" width="2" height="1" fill="#000"/><rect x="55" y="25" width="1" height="1" fill="#fff"/><rect x="56" y="25" width="2" height="1" fill="#000"/><rect x="58" y="25" width="9" height="1" fill="#fff"/><rect x="67" y="25" width="2" height="1" fill="#000"/><rect x="69" y="25" width="1" height="1" fill="#fff"/><rect x="70" y="25" width="2" height="1" fill="#000"/><rect x="72" y="25" width="9" height="1" fill="#fff"/><rect x="81" y="25" width="2" height="1" fill="#000"/><rect x="83" y="25" width="1" height="1" fill="#fff"/><rect x="84" y="25" width="2" height="1" fill="#000"/><rect x="86" y="25" width="9" height="1" fill="#fff"/><rect x="95" y="25" width="2" height="1" fill="#000"/><rect x="97" y="25" width="1" height="1" fill="#fff"/><rect x="98" y="25" width="2" height="1" fill="#000"/><rect x="100" y="25" width="9" height="1" fill="#fff"/><rect x="109" y="25" width="2" height="1" fill="#000"/><rect x="0" y="26" width="13" height="1" fill="#000"/><rect x="13" y="26" width="1" height="1" fill="#fff"/><rect x="14" y="26" width="13" height="1" fill="#000"/><rect x="27" y="26" width="1" height="1" fill="#fff"/><rect x="28" y="26" width="13" height="1" fill="#000"/><rect x="41" y="26" width="1" height="1" fill="#fff"/><rect x="42" y="26" width="13" height="1" fill="#000"/><rect x="55" y="26" width="1" height="1" fill="#fff"/><rect x="56" y="26" width="13" height="1" fill="#000"/><rect x="69" y="26" width="1" height="1" fill="#fff"/><rect x="70" y="26" width="13" height="1" fill="#000"/><rect x="83" y="26" width="1" height="1" fill="#fff"/><rect x="84" y="26" width="13" height="1" fill="#000"/><rect x="97" y="26" width="1" height="1" fill="#fff"/><rect x="98" y="26" width="13" height="1" fill="#000"/></svg>
<div style="position:absolute;left:2px;top:552px;width:783px;height:1px;background:#fff"></div>
<div style="position:absolute;left:3px;top:555px;width:576px;height:16px;background:#fff"></div>
<div style="position:absolute;left:3px;top:555px;width:575px;height:15px;background:#a0a0a0"></div>
<div style="position:absolute;left:4px;top:556px;width:574px;height:14px;background:#fff"></div>
<div style="position:absolute;left:5px;top:557px;width:572px;height:12px;background:#008000"></div>
<div class="t" style="left:583px;top:558px;font:12px/12px 'Liberation Sans', sans-serif;color:#000;transform:scaleX(0.93);transform-origin:0 0">100%</div>
<div style="position:absolute;left:781px;top:561px;width:2px;height:2px;background:#a0a0a0"></div>
<div style="position:absolute;left:777px;top:565px;width:2px;height:2px;background:#a0a0a0"></div>
<div style="position:absolute;left:781px;top:565px;width:2px;height:2px;background:#a0a0a0"></div>
<div style="position:absolute;left:773px;top:569px;width:2px;height:2px;background:#a0a0a0"></div>
<div style="position:absolute;left:777px;top:569px;width:2px;height:2px;background:#a0a0a0"></div>
<div style="position:absolute;left:781px;top:569px;width:2px;height:2px;background:#a0a0a0"></div>
</body></html>
